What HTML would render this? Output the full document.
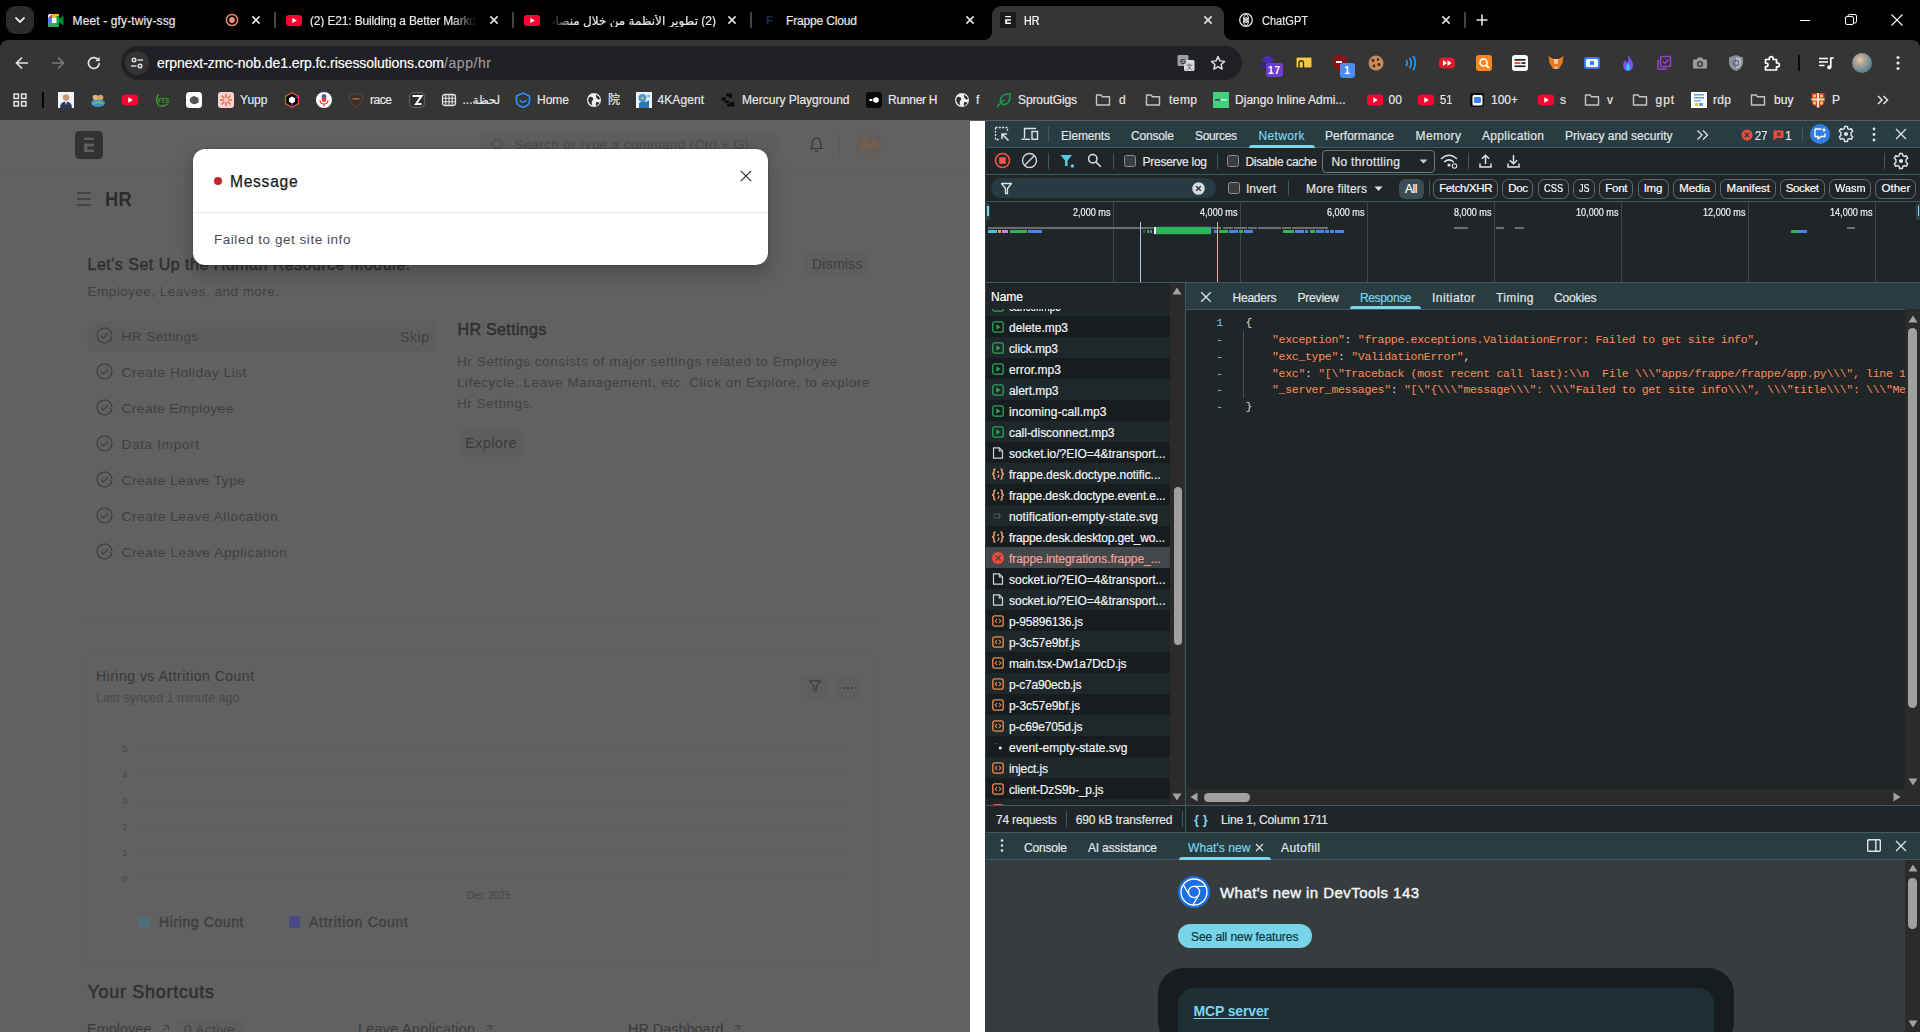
<!DOCTYPE html>
<html lang="en"><head><meta charset="utf-8"><title>HR</title>
<style>
html,body{margin:0;padding:0;background:#000;}
body{width:1920px;height:1032px;overflow:hidden;position:relative;font-family:"Liberation Sans","Noto Sans CJK SC",sans-serif;}
#root{position:absolute;left:0;top:0;width:1920px;height:1032px;overflow:hidden;}
#root div,#root span,#root svg{position:absolute;}
#root div{box-sizing:border-box;}
.t{white-space:pre;line-height:1;}
</style></head>
<body><div id="root">
<div style="left:0px;top:0px;width:1920px;height:40px;background:#000;"></div>
<div style="left:0px;top:40px;width:1920px;height:80px;background:#353535;border-radius:8px 8px 0 0;"></div>
<div style="left:6px;top:6px;width:28px;height:28px;background:#2b2b2b;border-radius:9px;"></div>
<svg style="left:13px;top:14px;" width="14" height="12" viewBox="0 0 14 12"><path d="M3 4 L7 8 L11 4" fill="none" stroke="#e3e3e3" stroke-width="1.8" stroke-linecap="round" stroke-linejoin="round"/></svg>
<svg style="left:48px;top:14px;" width="16" height="13" viewBox="0 0 16 13"><rect x="0" y="0" width="11" height="13" rx="2" fill="#fff"/><path d="M0 4 L4 0 L4 4 Z" fill="#ea4335"/><rect x="4" y="0" width="7" height="4" fill="#fbbc04"/><rect x="0" y="4" width="4" height="5.5" fill="#4285f4"/><rect x="0" y="9" width="11" height="4" rx="1" fill="#34a853"/><rect x="4" y="4" width="7" height="5" fill="#fff"/><path d="M11 4.5 L15.5 1.5 L15.5 11.5 L11 8.5 Z" fill="#00832d"/><rect x="8.5" y="2" width="2.5" height="9" fill="#00ac47"/></svg>
<span class="t" style="left:72.5px;top:14.86px;font-size:12px;color:#e8e8e8;-webkit-text-stroke:0.18px #e8e8e8;letter-spacing:0.129px;">Meet - gfy-twiy-ssg</span>
<svg style="left:224px;top:12px;" width="16" height="16" viewBox="0 0 16 16"><circle cx="8" cy="8" r="5.6" fill="none" stroke="#f28b82" stroke-width="1.5"/><circle cx="8" cy="8" r="2.9" fill="#f28b82"/></svg>
<svg style="left:248px;top:12px;" width="16" height="16" viewBox="0 0 16 16"><path d="M4.4 4.4 L11.6 11.6 M11.6 4.4 L4.4 11.6" stroke="#e3e3e3" stroke-width="1.6" fill="none"/></svg>
<div style="left:274.2px;top:12px;width:2px;height:16px;background:#454545;"></div>
<svg style="left:286.0px;top:15.0px;" width="16" height="11" viewBox="0 0 16 11"><rect x="0" y="0" width="16" height="11" rx="3" fill="#ff0033"/><path d="M6.4 2.97 L10.88 5.5 L6.4 8.03 Z" fill="#fff"/></svg>
<span class="t" style="left:310px;top:14.86px;font-size:12px;color:#e8e8e8;-webkit-text-stroke:0.18px #e8e8e8;letter-spacing:-0.153px;-webkit-mask-image:linear-gradient(90deg,#000 86%,transparent 100%);">(2) E21: Building a Better Markd</span>
<svg style="left:486px;top:12px;" width="16" height="16" viewBox="0 0 16 16"><path d="M4.4 4.4 L11.6 11.6 M11.6 4.4 L4.4 11.6" stroke="#e3e3e3" stroke-width="1.6" fill="none"/></svg>
<div style="left:512.2px;top:12px;width:2px;height:16px;background:#454545;"></div>
<svg style="left:523.5px;top:15.0px;" width="16" height="11" viewBox="0 0 16 11"><rect x="0" y="0" width="16" height="11" rx="3" fill="#ff0033"/><path d="M6.4 2.97 L10.88 5.5 L6.4 8.03 Z" fill="#fff"/></svg>
<span class="t" style="left:550px;top:14.86px;font-size:12px;color:#e8e8e8;-webkit-text-stroke:0.18px #e8e8e8;direction:rtl;width:166px;text-align:right;font-family:&quot;Liberation Sans&quot;,&quot;DejaVu Sans&quot;,sans-serif;-webkit-mask-image:linear-gradient(270deg,#000 86%,transparent 100%);">(2) تطوير الأنظمة من خلال منصات</span>
<svg style="left:724px;top:12px;" width="16" height="16" viewBox="0 0 16 16"><path d="M4.4 4.4 L11.6 11.6 M11.6 4.4 L4.4 11.6" stroke="#e3e3e3" stroke-width="1.6" fill="none"/></svg>
<div style="left:750.2px;top:12px;width:2px;height:16px;background:#454545;"></div>
<span class="t" style="left:766px;top:15.29px;font-size:11.5px;color:#16304f;font-weight:700;">F</span>
<span class="t" style="left:786px;top:14.86px;font-size:12px;color:#e8e8e8;-webkit-text-stroke:0.18px #e8e8e8;letter-spacing:-0.155px;">Frappe Cloud</span>
<svg style="left:962px;top:12px;" width="16" height="16" viewBox="0 0 16 16"><path d="M4.4 4.4 L11.6 11.6 M11.6 4.4 L4.4 11.6" stroke="#e3e3e3" stroke-width="1.6" fill="none"/></svg>
<div style="left:992px;top:6px;width:232px;height:34px;background:#353535;border-radius:9px 9px 0 0;"></div>
<svg style="left:984px;top:32px;" width="8" height="8" viewBox="0 0 8 8"><path d="M8 0 L8 8 L0 8 A8 8 0 0 0 8 0 Z" fill="#353535"/></svg>
<svg style="left:1224px;top:32px;" width="8" height="8" viewBox="0 0 8 8"><path d="M0 0 L0 8 L8 8 A8 8 0 0 1 0 0 Z" fill="#353535"/></svg>
<div style="left:1000px;top:12px;width:16px;height:16px;background:#1a1a1a;border-radius:2.5px;"></div>
<svg style="left:1000px;top:12px;" width="16" height="16" viewBox="0 0 28 28"><path d="M9.1 6.8 H19 V9 H9.1 Z M9.1 12.5 H19 V15.4 H12.4 V18.4 H19 V21.1 H9.1 Z" fill="#fff"/></svg>
<span class="t" style="left:1024px;top:14.86px;font-size:12px;color:#fff;-webkit-text-stroke:0.18px #fff;transform:scaleX(0.8943);transform-origin:0 50%;">HR</span>
<svg style="left:1200px;top:12px;" width="16" height="16" viewBox="0 0 16 16"><path d="M4.4 4.4 L11.6 11.6 M11.6 4.4 L4.4 11.6" stroke="#e3e3e3" stroke-width="1.6" fill="none"/></svg>
<svg style="left:1238px;top:12px;" width="16" height="16" viewBox="0 0 16 16"><g fill="none" stroke="#e8e8e8" stroke-width="1.3"><circle cx="8" cy="8" r="6.3"/><path d="M8 1.7 L11 6 L8 8 L5 6 Z M8 14.3 L5 10 L8 8 L11 10 Z" stroke-width="1"/><circle cx="8" cy="8" r="2.2"/></g></svg>
<span class="t" style="left:1262px;top:14.86px;font-size:12px;color:#e8e8e8;-webkit-text-stroke:0.18px #e8e8e8;transform:scaleX(0.9197);transform-origin:0 50%;">ChatGPT</span>
<svg style="left:1438px;top:12px;" width="16" height="16" viewBox="0 0 16 16"><path d="M4.4 4.4 L11.6 11.6 M11.6 4.4 L4.4 11.6" stroke="#e3e3e3" stroke-width="1.6" fill="none"/></svg>
<div style="left:1464.2px;top:12px;width:2px;height:16px;background:#454545;"></div>
<svg style="left:1474px;top:12px;" width="16" height="16" viewBox="0 0 16 16"><path d="M8 2.5 V13.5 M2.5 8 H13.5" stroke="#e8e8e8" stroke-width="1.6" fill="none"/></svg>
<div style="left:1800px;top:20px;width:10px;height:1px;background:#fff;"></div>
<svg style="left:1845px;top:14px;" width="12" height="12" viewBox="0 0 12 12"><rect x="0.5" y="2.5" width="8" height="8" rx="1.5" fill="none" stroke="#fff" stroke-width="1"/><path d="M3 2.5 V2 Q3 0.5 4.5 0.5 H10 Q11.5 0.5 11.5 2 V7.5 Q11.5 9 10 9 H9" fill="none" stroke="#fff" stroke-width="1"/></svg>
<svg style="left:1891px;top:14px;" width="12" height="12" viewBox="0 0 12 12"><path d="M0.5 0.5 L11.5 11.5 M11.5 0.5 L0.5 11.5" stroke="#fff" stroke-width="1.1" fill="none"/></svg>
<svg style="left:14px;top:55px;" width="16" height="16" viewBox="0 0 16 16"><path d="M14 8 H2.5 M8 2.5 L2.5 8 L8 13.5" fill="none" stroke="#e3e3e3" stroke-width="1.7" stroke-linejoin="miter"/></svg>
<svg style="left:50px;top:55px;" width="16" height="16" viewBox="0 0 16 16"><path d="M2 8 H13.5 M8 2.5 L13.5 8 L8 13.5" fill="none" stroke="#787878" stroke-width="1.7"/></svg>
<svg style="left:86px;top:55px;" width="16" height="16" viewBox="0 0 16 16"><path d="M13.2 8 A5.4 5.4 0 1 1 11.6 4.2" fill="none" stroke="#e3e3e3" stroke-width="1.7"/><path d="M13.6 1.8 V6.2 H9.2 Z" fill="#e3e3e3"/></svg>
<div style="left:120.5px;top:46px;width:1121.5px;height:34px;background:#202124;border-radius:17px;"></div>
<div style="left:125px;top:51px;width:24px;height:24px;background:#343434;border-radius:12px;"></div>
<svg style="left:130px;top:56px;" width="14" height="14" viewBox="0 0 14 14"><g fill="none" stroke="#e3e3e3" stroke-width="1.4"><circle cx="4" cy="4" r="1.8"/><path d="M7.5 4 H13"/><circle cx="10" cy="10" r="1.8"/><path d="M1 10 H6.5"/></g></svg>
<span class="t" style="left:157px;top:56.17px;font-size:14px;color:#fff;-webkit-text-stroke:0.18px #fff;letter-spacing:-0.073px;">erpnext-zmc-nob.de1.erp.fc.risessolutions.com</span>
<span class="t" style="left:444px;top:56.17px;font-size:14px;color:#9a9a9a;-webkit-text-stroke:0.18px #9a9a9a;letter-spacing:0.570px;">/app/hr</span>
<svg style="left:1177px;top:54px;" width="18" height="18" viewBox="0 0 18 18"><rect x="0.5" y="1" width="11" height="11" rx="1.5" fill="#9e9e9e"/><rect x="7" y="6" width="10.5" height="11" rx="1.5" fill="#dadada"/><text x="6" y="10" font-size="8" font-weight="700" text-anchor="middle" fill="#2a2a2a" font-family="Liberation Sans, sans-serif">G</text><text x="12.3" y="15" font-size="7" text-anchor="middle" fill="#444" font-family="Liberation Sans, sans-serif">文</text></svg>
<svg style="left:1210px;top:55px;" width="16" height="16" viewBox="0 0 18 18"><path d="M9 1.8 L11.2 6.6 L16.4 7.2 L12.5 10.7 L13.6 15.9 L9 13.2 L4.4 15.9 L5.5 10.7 L1.6 7.2 L6.8 6.6 Z" fill="none" stroke="#e3e3e3" stroke-width="1.6" stroke-linejoin="round"/></svg>
<svg style="left:1259.0px;top:54.0px;overflow:visible;" width="18" height="18" viewBox="0 0 18 18"><path d="M9 1 L16 6 L9 10 L2 6 Z" fill="#4b2bb5"/><path d="M2 8 L9 12 L9 16 L2 12 Z" fill="#3b1f9a"/></svg>
<div style="left:1265.5px;top:62.5px;width:17px;height:14px;background:#6c3fd1;border-radius:3px;"></div>
<span class="t" style="left:1268px;top:65.55px;font-size:10px;color:#fff;font-weight:700;letter-spacing:0.878px;">17</span>
<svg style="left:1295.0px;top:54.0px;overflow:visible;" width="18" height="18" viewBox="0 0 18 18"><rect x="1" y="3" width="16" height="11" rx="1.5" fill="#f2c744" stroke="#2a2a2a" stroke-width="1"/><path d="M4 14 V8.5 Q4 7 5.5 7 H7 Q8.5 7 8.5 8.5 V14" fill="none" stroke="#2a2a2a" stroke-width="1.3"/></svg>
<svg style="left:1331.0px;top:54.0px;overflow:visible;" width="18" height="18" viewBox="0 0 18 18"><path d="M9 1 L16 3 V9 Q16 14 9 17 Q2 14 2 9 V3 Z" fill="#8e1414"/><rect x="5" y="7" width="6" height="2" fill="#fff"/></svg>
<div style="left:1339.5px;top:63px;width:15px;height:15px;background:#4c8df6;border-radius:3px;"></div>
<span class="t" style="left:1344.3px;top:65.55px;font-size:10px;color:#fff;font-weight:700;">1</span>
<svg style="left:1367.0px;top:54.0px;overflow:visible;" width="18" height="18" viewBox="0 0 18 18"><circle cx="9" cy="9" r="7.5" fill="#c98a5b"/><circle cx="6" cy="6.5" r="1.4" fill="#3a2415"/><circle cx="11" cy="5.5" r="1.2" fill="#3a2415"/><circle cx="12" cy="10.5" r="1.5" fill="#3a2415"/><circle cx="7" cy="12" r="1.4" fill="#3a2415"/></svg>
<svg style="left:1402.0px;top:54.0px;overflow:visible;" width="18" height="18" viewBox="0 0 18 18"><g fill="none" stroke="#1a9bf0" stroke-width="1.8" stroke-linecap="round"><path d="M4.5 6.5 Q6 9 4.5 11.5"/><path d="M8 4.5 Q10.5 9 8 13.5"/><path d="M11.5 2.5 Q15 9 11.5 15.5"/></g></svg>
<svg style="left:1438.0px;top:54.0px;overflow:visible;" width="18" height="18" viewBox="0 0 18 18"><rect x="1" y="3.5" width="16" height="11" rx="4" fill="#e01b2c"/><path d="M5 6 L9 9 L5 12 Z M9.5 6 L13.5 9 L9.5 12 Z" fill="#fff"/></svg>
<svg style="left:1475.0px;top:54.0px;overflow:visible;" width="18" height="18" viewBox="0 0 18 18"><rect x="1" y="1" width="16" height="16" rx="3" fill="#f5871f"/><circle cx="8.5" cy="8.5" r="3.5" fill="none" stroke="#fff" stroke-width="1.6"/><path d="M11 11 L14 14" stroke="#fff" stroke-width="1.8"/></svg>
<svg style="left:1511.0px;top:54.0px;overflow:visible;" width="18" height="18" viewBox="0 0 18 18"><rect x="1" y="1" width="16" height="16" rx="3" fill="#fff"/><rect x="3.5" y="5" width="11" height="1.7" fill="#222"/><rect x="3.5" y="8.2" width="6" height="1.7" fill="#e53935"/><rect x="10.5" y="8.2" width="4" height="1.7" fill="#222"/><rect x="3.5" y="11.4" width="11" height="1.7" fill="#222"/></svg>
<svg style="left:1547.0px;top:54.0px;overflow:visible;" width="18" height="18" viewBox="0 0 18 18"><path d="M1.5 2 L6.5 5 H11.5 L16.5 2 L15.5 9 L12 15 H6 L2.5 9 Z" fill="#e8761b"/><path d="M6.5 5 H11.5 L10.5 10 H7.5 Z" fill="#f5c9a3"/><path d="M7 12.5 H11 L10 15 H8 Z" fill="#d0c0b0"/></svg>
<svg style="left:1583.0px;top:54.0px;overflow:visible;" width="18" height="18" viewBox="0 0 18 18"><rect x="1" y="3" width="16" height="12" rx="3" fill="#3d7bf7"/><rect x="3" y="5" width="12" height="8" rx="1.5" fill="#fff"/><circle cx="9" cy="9" r="2.3" fill="#3d7bf7"/></svg>
<svg style="left:1619.0px;top:54.0px;overflow:visible;" width="18" height="18" viewBox="0 0 18 18"><path d="M9 1 Q15 8 14 12 Q13 17 9 17 Q5 17 4 12 Q3.5 9 6.5 6 Q7 9 8.5 8 Q10 5 9 1 Z" fill="#7b4ff0"/><path d="M9 9 Q12 12 11 14.5 Q10 16.5 9 16.5 Q7 16 7 13.5 Q7 11.5 9 9 Z" fill="#38c6f4"/></svg>
<svg style="left:1655.0px;top:54.0px;overflow:visible;" width="18" height="18" viewBox="0 0 18 18"><g fill="none" stroke="#9a3fd0" stroke-width="1.5"><path d="M3 6 V15 H12"/><rect x="5.5" y="2.5" width="10" height="10" rx="1"/><path d="M8 7.5 L10 9.5 L13.5 5.5"/></g></svg>
<svg style="left:1691.0px;top:54.0px;overflow:visible;" width="18" height="18" viewBox="0 0 18 18"><path d="M2 5.5 H5.5 L7 3.5 H11 L12.5 5.5 H16 V14.5 H2 Z" fill="#9a9a9a"/><circle cx="9" cy="10" r="3" fill="#343434"/><circle cx="9" cy="10" r="1.7" fill="#9a9a9a"/></svg>
<svg style="left:1727.0px;top:54.0px;overflow:visible;" width="18" height="18" viewBox="0 0 18 18"><path d="M9 1 L16 3.5 V9 Q16 14 9 17 Q2 14 2 9 V3.5 Z" fill="#8b919a"/><path d="M9 3 L14 4.8 V9 Q14 12.8 9 15 Z" fill="#b5bcc6"/><circle cx="9" cy="9" r="2.6" fill="none" stroke="#5d6672" stroke-width="1.2"/></svg>
<svg style="left:1763.0px;top:54.0px;overflow:visible;" width="18" height="18" viewBox="0 0 18 18"><path d="M2.5 5.5 H6.3 V4.5 A1.9 1.9 0 0 1 10.1 4.5 V5.5 H13.5 V9 H14.5 A1.9 1.9 0 0 1 14.5 12.8 H13.5 V16 H2.5 V12.5 H3.3 A1.7 1.7 0 0 0 3.3 9.1 H2.5 Z" fill="none" stroke="#fff" stroke-width="1.7" stroke-linejoin="round"/></svg>
<div style="left:1798px;top:55px;width:2px;height:16px;background:#0a0a0a;"></div>
<svg style="left:1817.0px;top:54.0px;overflow:visible;" width="18" height="18" viewBox="0 0 18 18"><g stroke="#fff" stroke-width="1.7" fill="none"><path d="M2 4.5 H11 M2 8 H11 M2 11.5 H7.5"/><path d="M13.8 13 V4 H16.8"/></g><circle cx="12.3" cy="13.3" r="2.1" fill="#fff"/></svg>
<div style="left:1852px;top:53px;width:20px;height:20px;background:#8a9aa8;border-radius:10px;background:radial-gradient(circle at 40% 35%,#d8c8b8 0,#b9a690 25%,#6f8f9c 55%,#4d6a58 100%);"></div>
<svg style="left:1890px;top:54px;" width="16" height="18" viewBox="0 0 16 18"><circle cx="8" cy="3.5" r="1.6" fill="#e3e3e3"/><circle cx="8" cy="9" r="1.6" fill="#e3e3e3"/><circle cx="8" cy="14.5" r="1.6" fill="#e3e3e3"/></svg>
<svg style="left:13px;top:93px;" width="14" height="14" viewBox="0 0 16 16"><g fill="none" stroke="#e3e3e3" stroke-width="1.7"><rect x="1.2" y="1.2" width="5" height="5"/><rect x="9.8" y="1.2" width="5" height="5"/><rect x="1.2" y="9.8" width="5" height="5"/><rect x="9.8" y="9.8" width="5" height="5"/></g></svg>
<div style="left:42px;top:92px;width:2px;height:16px;background:#050505;"></div>
<svg style="left:58.0px;top:92.0px;" width="16" height="16" viewBox="0 0 16 16"><rect width="16" height="16" fill="#f4f4f6"/><path d="M2 16 Q2 9.5 8 9.5 Q14 9.5 14 16 Z" fill="#2d3c5e"/><circle cx="8" cy="5.5" r="3.2" fill="#c79a7a"/><path d="M7 9.5 L8 13 L9 9.5 Z" fill="#fff"/></svg>
<svg style="left:90.0px;top:92.0px;" width="16" height="16" viewBox="0 0 16 16"><ellipse cx="8" cy="11" rx="7" ry="4" fill="#3f8fd0"/><circle cx="5.5" cy="5.5" r="2.8" fill="#e3b07c"/><circle cx="10.5" cy="5.5" r="2.8" fill="#d9a36d"/><path d="M3 12 Q8 8 13 12" stroke="#79c257" stroke-width="1.5" fill="none"/></svg>
<svg style="left:122.0px;top:92.0px;" width="16" height="16" viewBox="0 0 16 16"><rect x="0" y="2.5" width="16" height="11" rx="3" fill="#ff0033"/><path d="M6.3 5.3 L10.8 8 L6.3 10.7 Z" fill="#fff"/></svg>
<svg style="left:153.5px;top:92.0px;" width="16" height="16" viewBox="0 0 16 16"><path d="M4.5 2.5 Q0.5 8 4.5 13.5 M4.5 13.5 Q9 15.5 13.5 12" fill="none" stroke="#3f9a2b" stroke-width="1.3"/><text x="9" y="10.5" font-size="6.5" font-weight="700" text-anchor="middle" fill="#3f9a2b" font-family="Liberation Sans, sans-serif">YTS</text></svg>
<svg style="left:186.0px;top:92.0px;" width="16" height="16" viewBox="0 0 16 16"><rect width="16" height="16" rx="3.5" fill="#fff"/><path d="M4 10 Q3 6 6 5 Q8 3 10 5 Q13 5 12.5 8 Q13.5 11 10.5 11.5 Q8 13 6 11.5 Z" fill="#555"/></svg>
<svg style="left:218.0px;top:92.0px;" width="16" height="16" viewBox="0 0 16 16"><rect width="16" height="16" rx="3" fill="#f8d3cb"/><g stroke="#e46a50" stroke-width="1.5" stroke-linecap="round"><path d="M8 2.5 V5.5 M8 10.5 V13.5 M2.5 8 H5.5 M10.5 8 H13.5 M4 4 L6 6 M10 10 L12 12 M12 4 L10 6 M6 10 L4 12"/></g></svg>
<span class="t" style="left:240px;top:93.86px;font-size:12px;color:#e8e8e8;-webkit-text-stroke:0.18px #e8e8e8;letter-spacing:0.046px;">Yupp</span>
<svg style="left:284.0px;top:92.0px;" width="16" height="16" viewBox="0 0 16 16"><path d="M8 0.8 L14.5 4.4 V11.6 L8 15.2 L1.5 11.6 V4.4 Z" fill="#0b0b0b" stroke="#e8523a" stroke-width="1.2"/><path d="M8 15 V8 L14.3 4.5" fill="none" stroke="#7b4ff0" stroke-width="1"/><path d="M8 4.5 L11 6.2 V9.8 L8 11.5 L5 9.8 V6.2 Z" fill="#fff"/></svg>
<svg style="left:316.0px;top:92.0px;" width="16" height="16" viewBox="0 0 16 16"><circle cx="8" cy="8" r="8" fill="#fff"/><rect x="5.7" y="2.5" width="4.6" height="7.5" rx="2.3" fill="#e53935"/><rect x="5.7" y="2.5" width="4.6" height="3" rx="1.5" fill="#2a5db0"/><path d="M4 8 Q4 12 8 12 Q12 12 12 8" fill="none" stroke="#e53935" stroke-width="1.1"/><path d="M8 12 V14.5" stroke="#e53935" stroke-width="1.1"/></svg>
<svg style="left:348.0px;top:92.0px;" width="16" height="16" viewBox="0 0 16 16"><path d="M1 2.5 Q8 0.5 15 2.5 Q15 11 8 15.5 Q1 11 1 2.5 Z" fill="#3a302c" stroke="#5a4a40" stroke-width="0.8"/><path d="M4 6 H11 L12 7.5 H5 Z" fill="#c8561f"/></svg>
<span class="t" style="left:370px;top:93.86px;font-size:12px;color:#e8e8e8;-webkit-text-stroke:0.18px #e8e8e8;letter-spacing:-0.447px;">race</span>
<svg style="left:409.0px;top:92.0px;" width="16" height="16" viewBox="0 0 16 16"><rect x="0.7" y="0.7" width="14.6" height="14.6" rx="3" fill="#2c2c2c" stroke="#6a6a6a" stroke-width="1"/><path d="M3.5 4 H12.5 L7 12 H12.5" fill="none" stroke="#fff" stroke-width="2"/></svg>
<svg style="left:441.0px;top:92.0px;" width="16" height="16" viewBox="0 0 16 16"><rect x="1.5" y="2.5" width="13" height="11" rx="2.5" fill="none" stroke="#e3e3e3" stroke-width="1.3"/><path d="M1.5 6.2 H14.5 M1.5 9.8 H14.5 M4.8 2.5 V13.5 M8 2.5 V13.5 M11.2 2.5 V13.5" stroke="#e3e3e3" stroke-width="1.1"/></svg>
<span class="t" style="left:462.5px;top:93.86px;font-size:12px;color:#e8e8e8;-webkit-text-stroke:0.18px #e8e8e8;font-family:&quot;Liberation Sans&quot;,&quot;DejaVu Sans&quot;,sans-serif;width:36px;text-align:left;">...لحظة</span>
<svg style="left:514.5px;top:92.0px;" width="16" height="16" viewBox="0 0 16 16"><path d="M8 1 L14.5 4 V9.5 Q14.5 13 8 15.3 Q1.5 13 1.5 9.5 V4 Z" fill="none" stroke="#2f8df5" stroke-width="1.7" stroke-linejoin="round"/><path d="M5 8.5 Q8 12 11 8.5" fill="none" stroke="#2f8df5" stroke-width="1.6" stroke-linecap="round"/></svg>
<span class="t" style="left:537px;top:93.86px;font-size:12px;color:#e8e8e8;-webkit-text-stroke:0.18px #e8e8e8;letter-spacing:-0.003px;">Home</span>
<svg style="left:585.5px;top:92.0px;" width="16" height="16" viewBox="0 0 16 16"><circle cx="8" cy="8" r="7" fill="#f1f1f1"/><path d="M3 5 Q6 4 7 6 Q8 8 6 9 Q5 11 6.5 13.5 Q3 12 2 8.5 Z M10 2.5 Q13.5 4 14.3 7 Q12 8 11 6.5 Q9.5 5 10 2.5 Z M10 10 Q12.5 9.5 13.5 11 Q12 13.5 9.8 14 Z" fill="#343434"/></svg>
<span class="t" style="left:608px;top:93.86px;font-size:12px;color:#e8e8e8;-webkit-text-stroke:0.18px #e8e8e8;">院</span>
<svg style="left:636.0px;top:92.0px;" width="16" height="16" viewBox="0 0 16 16"><rect width="16" height="16" fill="#e9f4fb"/><circle cx="6.5" cy="6" r="4" fill="#3d9bd8"/><circle cx="6.5" cy="6" r="1.6" fill="#f2a23a"/><path d="M3 16 V11 Q6 8.5 10 10 L13 8 V16 Z" fill="#2b76b4"/><circle cx="12.5" cy="4" r="1.5" fill="#6fb7e6"/></svg>
<span class="t" style="left:657.5px;top:93.86px;font-size:12px;color:#e8e8e8;-webkit-text-stroke:0.18px #e8e8e8;letter-spacing:0.078px;">4KAgent</span>
<svg style="left:719.5px;top:92.0px;" width="16" height="16" viewBox="0 0 16 16"><path d="M6 1.5 H12 V6 H9 V4.5 H6 Z M1.5 5.5 H6 V8.5 H9 V11 H4.5 V8.5 H1.5 Z M10 10 H14.5 V14.5 H7 V11.5 H10 Z" fill="#0c0c0c"/></svg>
<span class="t" style="left:742px;top:93.86px;font-size:12px;color:#e8e8e8;-webkit-text-stroke:0.18px #e8e8e8;letter-spacing:0.008px;">Mercury Playground</span>
<svg style="left:866.0px;top:92.0px;" width="16" height="16" viewBox="0 0 16 16"><rect width="16" height="16" rx="3" fill="#0a0a0a"/><circle cx="10" cy="8" r="2.8" fill="#fff"/><rect x="3.2" y="7" width="3.5" height="2" rx="1" fill="#fff"/></svg>
<span class="t" style="left:888px;top:93.86px;font-size:12px;color:#e8e8e8;-webkit-text-stroke:0.18px #e8e8e8;letter-spacing:-0.265px;">Runner H</span>
<svg style="left:954.0px;top:92.0px;" width="16" height="16" viewBox="0 0 16 16"><circle cx="8" cy="8" r="7" fill="#f1f1f1"/><path d="M3 5 Q6 4 7 6 Q8 8 6 9 Q5 11 6.5 13.5 Q3 12 2 8.5 Z M10 2.5 Q13.5 4 14.3 7 Q12 8 11 6.5 Q9.5 5 10 2.5 Z M10 10 Q12.5 9.5 13.5 11 Q12 13.5 9.8 14 Z" fill="#343434"/></svg>
<span class="t" style="left:976px;top:93.86px;font-size:12px;color:#e8e8e8;-webkit-text-stroke:0.18px #e8e8e8;">f</span>
<svg style="left:996.0px;top:92.0px;" width="16" height="16" viewBox="0 0 16 16"><path d="M14 2 Q6 1.5 4.5 7 Q3.8 10 6 12 Q10 13.5 12.5 10 Q14.5 7 14 2 Z M1.5 14.5 Q4 11 8 8" fill="none" stroke="#1f9a50" stroke-width="1.5" stroke-linecap="round"/></svg>
<span class="t" style="left:1018px;top:93.86px;font-size:12px;color:#e8e8e8;-webkit-text-stroke:0.18px #e8e8e8;letter-spacing:-0.114px;">SproutGigs</span>
<svg style="left:1094.5px;top:92.0px;" width="16" height="16" viewBox="0 0 16 16"><path d="M1.5 3 H6 L7.5 4.7 H14.5 V13 H1.5 Z" fill="none" stroke="#c4c4c4" stroke-width="1.4" stroke-linejoin="round"/></svg>
<span class="t" style="left:1119px;top:93.86px;font-size:12px;color:#e8e8e8;-webkit-text-stroke:0.18px #e8e8e8;">d</span>
<svg style="left:1144.5px;top:92.0px;" width="16" height="16" viewBox="0 0 16 16"><path d="M1.5 3 H6 L7.5 4.7 H14.5 V13 H1.5 Z" fill="none" stroke="#c4c4c4" stroke-width="1.4" stroke-linejoin="round"/></svg>
<span class="t" style="left:1169px;top:93.86px;font-size:12px;color:#e8e8e8;-webkit-text-stroke:0.18px #e8e8e8;letter-spacing:0.441px;">temp</span>
<svg style="left:1213.0px;top:92.0px;" width="16" height="16" viewBox="0 0 16 16"><rect width="16" height="16" fill="#44d07b"/><rect x="2" y="7" width="5" height="1.6" fill="#5b2a86"/><rect x="8" y="7" width="6" height="1.6" fill="#d8f5e3"/></svg>
<span class="t" style="left:1235px;top:93.86px;font-size:12px;color:#e8e8e8;-webkit-text-stroke:0.18px #e8e8e8;letter-spacing:0.022px;">Django Inline Admi...</span>
<svg style="left:1367.0px;top:92.0px;" width="16" height="16" viewBox="0 0 16 16"><rect x="0" y="2.5" width="16" height="11" rx="3" fill="#ff0033"/><path d="M6.3 5.3 L10.8 8 L6.3 10.7 Z" fill="#fff"/></svg>
<span class="t" style="left:1388.6px;top:93.86px;font-size:12px;color:#e8e8e8;-webkit-text-stroke:0.18px #e8e8e8;letter-spacing:0.054px;">00</span>
<svg style="left:1418.0px;top:92.0px;" width="16" height="16" viewBox="0 0 16 16"><rect x="0" y="2.5" width="16" height="11" rx="3" fill="#ff0033"/><path d="M6.3 5.3 L10.8 8 L6.3 10.7 Z" fill="#fff"/></svg>
<span class="t" style="left:1440px;top:93.86px;font-size:12px;color:#e8e8e8;-webkit-text-stroke:0.18px #e8e8e8;transform:scaleX(0.9291);transform-origin:0 50%;">51</span>
<svg style="left:1469.0px;top:92.0px;" width="16" height="16" viewBox="0 0 16 16"><rect x="1" y="1" width="14" height="14" rx="2.5" fill="#0c0c0c"/><rect x="3.5" y="3" width="10" height="10.5" rx="1.5" fill="#fff"/><rect x="5" y="5" width="7" height="6" rx="1" fill="#3d7bf7"/></svg>
<span class="t" style="left:1491px;top:93.86px;font-size:12px;color:#e8e8e8;-webkit-text-stroke:0.18px #e8e8e8;letter-spacing:-0.009px;">100+</span>
<svg style="left:1537.7px;top:92.0px;" width="16" height="16" viewBox="0 0 16 16"><rect x="0" y="2.5" width="16" height="11" rx="3" fill="#ff0033"/><path d="M6.3 5.3 L10.8 8 L6.3 10.7 Z" fill="#fff"/></svg>
<span class="t" style="left:1560px;top:93.86px;font-size:12px;color:#e8e8e8;-webkit-text-stroke:0.18px #e8e8e8;">s</span>
<svg style="left:1584.0px;top:92.0px;" width="16" height="16" viewBox="0 0 16 16"><path d="M1.5 3 H6 L7.5 4.7 H14.5 V13 H1.5 Z" fill="none" stroke="#c4c4c4" stroke-width="1.4" stroke-linejoin="round"/></svg>
<span class="t" style="left:1607px;top:93.86px;font-size:12px;color:#e8e8e8;-webkit-text-stroke:0.18px #e8e8e8;">v</span>
<svg style="left:1632.0px;top:92.0px;" width="16" height="16" viewBox="0 0 16 16"><path d="M1.5 3 H6 L7.5 4.7 H14.5 V13 H1.5 Z" fill="none" stroke="#c4c4c4" stroke-width="1.4" stroke-linejoin="round"/></svg>
<span class="t" style="left:1655.6px;top:93.86px;font-size:12px;color:#e8e8e8;-webkit-text-stroke:0.18px #e8e8e8;letter-spacing:0.860px;">gpt</span>
<svg style="left:1691.0px;top:92.0px;" width="16" height="16" viewBox="0 0 16 16"><rect width="16" height="16" fill="#fff"/><rect x="3" y="2" width="10" height="1.5" fill="#5aa0e0"/><rect x="3" y="5" width="10" height="1.5" fill="#5aa0e0"/><rect x="3" y="8" width="7" height="1.5" fill="#88b8e8"/><rect x="4" y="11" width="3" height="3" fill="#f2c744"/><rect x="8" y="11" width="4" height="3" fill="#5aa0e0"/></svg>
<span class="t" style="left:1713px;top:93.86px;font-size:12px;color:#e8e8e8;-webkit-text-stroke:0.18px #e8e8e8;letter-spacing:0.329px;">rdp</span>
<svg style="left:1750.0px;top:92.0px;" width="16" height="16" viewBox="0 0 16 16"><path d="M1.5 3 H6 L7.5 4.7 H14.5 V13 H1.5 Z" fill="none" stroke="#c4c4c4" stroke-width="1.4" stroke-linejoin="round"/></svg>
<span class="t" style="left:1774px;top:93.86px;font-size:12px;color:#e8e8e8;-webkit-text-stroke:0.18px #e8e8e8;letter-spacing:0.077px;">buy</span>
<svg style="left:1810.0px;top:92.0px;" width="16" height="16" viewBox="0 0 16 16"><path d="M1.5 1 H14.5 V9 Q14.5 13.5 8 15.5 Q1.5 13.5 1.5 9 Z" fill="#c8362c"/><path d="M8 1 V15.5 M1.5 7.5 H14.5" stroke="#f4e3c0" stroke-width="2.2"/><rect x="3" y="2.5" width="3" height="3" fill="#f2c744"/><rect x="10" y="2.5" width="3" height="3" fill="#f2c744"/><rect x="3" y="9.5" width="3" height="3" fill="#f2c744"/><rect x="10" y="9.5" width="3" height="3" fill="#f2c744"/></svg>
<span class="t" style="left:1832px;top:93.86px;font-size:12px;color:#e8e8e8;-webkit-text-stroke:0.18px #e8e8e8;">P</span>
<svg style="left:1876px;top:93px;" width="14" height="14" viewBox="0 0 14 14"><path d="M2 3 L6 7 L2 11 M7.5 3 L11.5 7 L7.5 11" fill="none" stroke="#e3e3e3" stroke-width="1.5"/></svg>
<div style="left:0px;top:120px;width:970px;height:912px;background:#616161;"></div>
<div style="left:970px;top:120px;width:15px;height:912px;background:#ffffff;"></div>
<div style="left:0px;top:168px;width:970px;height:1px;background:#5d5d5d;"></div>
<div style="left:75px;top:131px;width:28px;height:28px;background:#323232;border-radius:4.5px;"></div>
<svg style="left:75px;top:131px;" width="28" height="28" viewBox="0 0 28 28"><path d="M9.1 6.8 H19 V9 H9.1 Z M9.1 12.5 H19 V15.4 H12.4 V18.4 H19 V21.1 H9.1 Z" fill="#5f5f5f"/></svg>
<div style="left:479px;top:131px;width:299px;height:28px;background:#5e5e5e;border-radius:8px;"></div>
<svg style="left:490px;top:137px;" width="15" height="15" viewBox="0 0 15 15"><circle cx="7" cy="7" r="4.6" fill="none" stroke="#4a4a4a" stroke-width="1.1"/></svg>
<span class="t" style="left:514.3px;top:137.59px;font-size:13.5px;color:#4a4a4a;letter-spacing:0.383px;">Search or type a command (Ctrl + G)</span>
<svg style="left:808px;top:136px;" width="17" height="18" viewBox="0 0 17 18"><path d="M8.5 2 Q4.5 2 4.5 7 Q4.5 11 3 12.5 H14 Q12.5 11 12.5 7 Q12.5 2 8.5 2 Z" fill="none" stroke="#333" stroke-width="1.1" stroke-linejoin="round"/><path d="M7 14.5 Q8.5 16 10 14.5" fill="none" stroke="#333" stroke-width="1.1"/></svg>
<div style="left:839px;top:133px;width:1px;height:24px;background:#595959;"></div>
<div style="left:855px;top:130.7px;width:28px;height:28px;background:#645e5a;border-radius:14px;"></div>
<span class="t" style="left:859.2px;top:138.34px;font-size:13.8px;color:#8c5d3c;letter-spacing:0.590px;">AA</span>
<svg style="left:76px;top:191px;" width="16" height="16" viewBox="0 0 16 16"><path d="M1 2.05 H14.8 M1 8.1 H14.8 M1 14.1 H14.8" stroke="#3a3a3a" stroke-width="1.5" fill="none"/></svg>
<span class="t" style="left:104.5px;top:188.84px;font-size:20.3px;color:#2d2d2d;font-weight:700;transform:scaleX(0.9140);transform-origin:0 50%;">HR</span>
<span class="t" style="left:87.5px;top:257.48px;font-size:16px;color:#303030;-webkit-text-stroke:0.45px #303030;letter-spacing:0.496px;">Let&#x27;s Set Up the Human Resource Module.</span>
<span class="t" style="left:87.5px;top:284.59px;font-size:13.5px;color:#414141;letter-spacing:0.468px;">Employee, Leaves, and more.</span>
<div style="left:804px;top:250px;width:66px;height:28px;background:#5e5e5e;border-radius:8px;"></div>
<span class="t" style="left:812px;top:257.17px;font-size:14px;color:#3d3d3d;letter-spacing:0.234px;">Dismiss</span>
<div style="left:87px;top:320.5px;width:350px;height:31.5px;background:#5e5e5e;border-radius:8px;"></div>
<svg style="left:95.5px;top:327.3px;" width="17" height="17" viewBox="0 0 17 17"><circle cx="8.5" cy="8.5" r="7.5" fill="none" stroke="#3a3a3a" stroke-width="1.1"/><path d="M5.3 8.8 L7.6 11 L11.8 6.4" fill="none" stroke="#3a3a3a" stroke-width="1.1" stroke-linecap="round" stroke-linejoin="round"/></svg>
<span class="t" style="left:121.5px;top:330.42px;font-size:13.7px;color:#404040;letter-spacing:0.391px;">HR Settings</span>
<svg style="left:95.5px;top:363.3px;" width="17" height="17" viewBox="0 0 17 17"><circle cx="8.5" cy="8.5" r="7.5" fill="none" stroke="#3a3a3a" stroke-width="1.1"/><path d="M5.3 8.8 L7.6 11 L11.8 6.4" fill="none" stroke="#3a3a3a" stroke-width="1.1" stroke-linecap="round" stroke-linejoin="round"/></svg>
<span class="t" style="left:121.5px;top:366.42px;font-size:13.7px;color:#404040;letter-spacing:0.515px;">Create Holiday List</span>
<svg style="left:95.5px;top:399.3px;" width="17" height="17" viewBox="0 0 17 17"><circle cx="8.5" cy="8.5" r="7.5" fill="none" stroke="#3a3a3a" stroke-width="1.1"/><path d="M5.3 8.8 L7.6 11 L11.8 6.4" fill="none" stroke="#3a3a3a" stroke-width="1.1" stroke-linecap="round" stroke-linejoin="round"/></svg>
<span class="t" style="left:121.5px;top:402.42px;font-size:13.7px;color:#404040;letter-spacing:0.440px;">Create Employee</span>
<svg style="left:95.5px;top:435.3px;" width="17" height="17" viewBox="0 0 17 17"><circle cx="8.5" cy="8.5" r="7.5" fill="none" stroke="#3a3a3a" stroke-width="1.1"/><path d="M5.3 8.8 L7.6 11 L11.8 6.4" fill="none" stroke="#3a3a3a" stroke-width="1.1" stroke-linecap="round" stroke-linejoin="round"/></svg>
<span class="t" style="left:121.5px;top:438.42px;font-size:13.7px;color:#404040;letter-spacing:0.593px;">Data Import</span>
<svg style="left:95.5px;top:471.3px;" width="17" height="17" viewBox="0 0 17 17"><circle cx="8.5" cy="8.5" r="7.5" fill="none" stroke="#3a3a3a" stroke-width="1.1"/><path d="M5.3 8.8 L7.6 11 L11.8 6.4" fill="none" stroke="#3a3a3a" stroke-width="1.1" stroke-linecap="round" stroke-linejoin="round"/></svg>
<span class="t" style="left:121.5px;top:474.42px;font-size:13.7px;color:#404040;letter-spacing:0.500px;">Create Leave Type</span>
<svg style="left:95.5px;top:507.3px;" width="17" height="17" viewBox="0 0 17 17"><circle cx="8.5" cy="8.5" r="7.5" fill="none" stroke="#3a3a3a" stroke-width="1.1"/><path d="M5.3 8.8 L7.6 11 L11.8 6.4" fill="none" stroke="#3a3a3a" stroke-width="1.1" stroke-linecap="round" stroke-linejoin="round"/></svg>
<span class="t" style="left:121.5px;top:510.42px;font-size:13.7px;color:#404040;letter-spacing:0.536px;">Create Leave Allocation</span>
<svg style="left:95.5px;top:543.3px;" width="17" height="17" viewBox="0 0 17 17"><circle cx="8.5" cy="8.5" r="7.5" fill="none" stroke="#3a3a3a" stroke-width="1.1"/><path d="M5.3 8.8 L7.6 11 L11.8 6.4" fill="none" stroke="#3a3a3a" stroke-width="1.1" stroke-linecap="round" stroke-linejoin="round"/></svg>
<span class="t" style="left:121.5px;top:546.42px;font-size:13.7px;color:#404040;letter-spacing:0.573px;">Create Leave Application</span>
<span class="t" style="left:400px;top:330.17px;font-size:14px;color:#404040;letter-spacing:0.589px;">Skip</span>
<span class="t" style="left:457.5px;top:322.48px;font-size:16px;color:#2f2f2f;-webkit-text-stroke:0.45px #2f2f2f;letter-spacing:0.343px;">HR Settings</span>
<span class="t" style="left:457px;top:354.59px;font-size:13.5px;color:#424242;letter-spacing:0.599px;">Hr Settings consists of major settings related to Employee</span>
<span class="t" style="left:457px;top:375.59px;font-size:13.5px;color:#424242;letter-spacing:0.587px;">Lifecycle, Leave Management, etc. Click on Explore, to explore</span>
<span class="t" style="left:457px;top:396.59px;font-size:13.5px;color:#424242;letter-spacing:0.543px;">Hr Settings.</span>
<div style="left:458px;top:429px;width:66px;height:28px;background:#5e5e5e;border-radius:8px;"></div>
<span class="t" style="left:465px;top:435.75px;font-size:14.5px;color:#3a3a3a;letter-spacing:0.406px;">Explore</span>
<div style="left:82px;top:620px;width:793px;height:1px;background:#5c5c5c;"></div>
<div style="left:81px;top:655px;width:797px;height:311px;border:1px solid #5d5d5d;border-radius:9px;"></div>
<span class="t" style="left:96px;top:669.17px;font-size:14px;color:#383838;letter-spacing:0.489px;">Hiring vs Attrition Count</span>
<span class="t" style="left:96px;top:692.44px;font-size:12.5px;color:#484848;letter-spacing:0.042px;">Last synced 1 minute ago</span>
<div style="left:801px;top:675px;width:28px;height:24px;background:#5e5e5e;border-radius:7px;"></div>
<svg style="left:807.8px;top:679.3px;" width="14" height="14" viewBox="0 0 14 14"><path d="M1.5 2 H12.5 L8.3 7 V12 L5.7 10.5 V7 Z" fill="none" stroke="#333" stroke-width="1" stroke-linejoin="round"/></svg>
<div style="left:834px;top:675px;width:28px;height:24.5px;background:#5e5e5e;border-radius:7px;"></div>
<svg style="left:842px;top:686px;" width="12" height="4" viewBox="0 0 12 4"><rect x="0.9" y="1.1" width="1.9" height="1.9" fill="#383838"/><rect x="5" y="1.1" width="1.9" height="1.9" fill="#383838"/><rect x="9.1" y="1.1" width="1.9" height="1.9" fill="#383838"/></svg>
<span class="t" style="left:122px;top:743.98px;font-size:9.5px;color:#474747;">5</span>
<div style="left:135px;top:748px;width:710px;height:1px;background:#5e5e5e;"></div>
<span class="t" style="left:122px;top:769.98px;font-size:9.5px;color:#474747;">4</span>
<div style="left:135px;top:774px;width:710px;height:1px;background:#5e5e5e;"></div>
<span class="t" style="left:122px;top:795.98px;font-size:9.5px;color:#474747;">3</span>
<div style="left:135px;top:800px;width:710px;height:1px;background:#5e5e5e;"></div>
<span class="t" style="left:122px;top:821.98px;font-size:9.5px;color:#474747;">2</span>
<div style="left:135px;top:826px;width:710px;height:1px;background:#5e5e5e;"></div>
<span class="t" style="left:122px;top:847.98px;font-size:9.5px;color:#474747;">1</span>
<div style="left:135px;top:852px;width:710px;height:1px;background:#5e5e5e;"></div>
<span class="t" style="left:122px;top:873.98px;font-size:9.5px;color:#474747;">0</span>
<div style="left:135px;top:878px;width:710px;height:1px;background:#5e5e5e;"></div>
<span class="t" style="left:467px;top:890.55px;font-size:10px;color:#464646;letter-spacing:0.099px;">Dec 2025</span>
<div style="left:138px;top:916px;width:11.5px;height:11.5px;background:#4e6c79;border-radius:2px;"></div>
<span class="t" style="left:159px;top:915.17px;font-size:14px;color:#404040;-webkit-text-stroke:0.45px #404040;letter-spacing:0.608px;">Hiring Count</span>
<div style="left:288.5px;top:916px;width:11.5px;height:11.5px;background:#4a4985;border-radius:2px;"></div>
<span class="t" style="left:309px;top:915.17px;font-size:14px;color:#404040;-webkit-text-stroke:0.45px #404040;letter-spacing:0.735px;">Attrition Count</span>
<span class="t" style="left:87.5px;top:982.78px;font-size:18px;color:#2f2f2f;-webkit-text-stroke:0.45px #2f2f2f;letter-spacing:0.700px;">Your Shortcuts</span>
<span class="t" style="left:87px;top:1021.75px;font-size:14.5px;color:#3b3b3b;letter-spacing:0.004px;">Employee</span>
<svg style="left:160.5px;top:1024px;" width="9" height="9" viewBox="0 0 9 9"><path d="M1.5 7.5 L7.5 1.5 M2.8 1.5 H7.5 V6.2" fill="none" stroke="#414141" stroke-width="1" /></svg>
<div style="left:177px;top:1019px;width:65.5px;height:24px;background:#5e5e5e;border-radius:6px;"></div>
<span class="t" style="left:184px;top:1022.59px;font-size:13.5px;color:#424242;letter-spacing:0.461px;">0 Active</span>
<span class="t" style="left:358px;top:1021.75px;font-size:14.5px;color:#3b3b3b;letter-spacing:0.208px;">Leave Application</span>
<svg style="left:484px;top:1024px;" width="9" height="9" viewBox="0 0 9 9"><path d="M1.5 7.5 L7.5 1.5 M2.8 1.5 H7.5 V6.2" fill="none" stroke="#414141" stroke-width="1" /></svg>
<span class="t" style="left:628px;top:1021.75px;font-size:14.5px;color:#3b3b3b;letter-spacing:-0.037px;">HR Dashboard</span>
<svg style="left:732px;top:1024px;" width="9" height="9" viewBox="0 0 9 9"><path d="M1.5 7.5 L7.5 1.5 M2.8 1.5 H7.5 V6.2" fill="none" stroke="#414141" stroke-width="1" /></svg>
<div style="left:193px;top:149px;width:575px;height:116px;background:#ffffff;border-radius:12px;box-shadow:0 8px 20px rgba(0,0,0,0.25),0 0 2px rgba(0,0,0,0.3);"></div>
<div style="left:193px;top:212px;width:575px;height:1px;background:#e8e8e8;"></div>
<div style="left:214px;top:177px;width:8.3px;height:8.3px;background:#c0272d;border-radius:4.2px;"></div>
<span class="t" style="left:230px;top:173.81px;font-size:15.6px;color:#171717;-webkit-text-stroke:0.25px #171717;letter-spacing:0.718px;">Message</span>
<svg style="left:739px;top:169px;" width="14" height="14" viewBox="0 0 14 14"><path d="M1.8 1.8 L12.2 12.2 M12.2 1.8 L1.8 12.2" stroke="#2a2a2a" stroke-width="1.2" fill="none"/></svg>
<span class="t" style="left:214px;top:232.59px;font-size:13.5px;color:#4c4c4c;letter-spacing:0.538px;">Failed to get site info</span>
<div style="left:985px;top:120px;width:935px;height:912px;background:#202528;"></div>
<div style="left:985px;top:120px;width:1px;height:912px;background:#2c4148;"></div>
<div style="left:986px;top:120px;width:934px;height:28px;background:#283c42;"></div>
<div style="left:986px;top:147px;width:934px;height:1px;background:#3b5a62;"></div>
<div style="left:970px;top:120px;width:950px;height:1px;background:#5a5a5a;"></div>
<svg style="left:994px;top:126.3px;" width="17" height="17" viewBox="0 0 17 17"><g fill="none" stroke="#dfe3e5" stroke-width="1.3"><path d="M1.5 1.5 H13.5 V6" stroke-dasharray="2 1.3"/><path d="M1.5 1.5 V13.5 H6" stroke-dasharray="2 1.3"/><path d="M14.5 14.5 L8 8 M8 13 V8 H13" stroke-width="1.5"/></g></svg>
<svg style="left:1021px;top:126.4px;" width="18" height="17" viewBox="0 0 18 17"><g fill="none" stroke="#dfe3e5" stroke-width="1.4"><path d="M3.5 12 V2.5 H15"/><path d="M0.5 13.3 H9"/><rect x="11" y="5.5" width="5.5" height="7.8"/></g></svg>
<div style="left:1048px;top:126px;width:1px;height:16px;background:#3b5a62;"></div>
<span class="t" style="left:1061px;top:129.86px;font-size:12px;color:#e3e6e8;-webkit-text-stroke:0.18px #e3e6e8;letter-spacing:-0.146px;">Elements</span>
<span class="t" style="left:1131px;top:129.86px;font-size:12px;color:#e3e6e8;-webkit-text-stroke:0.18px #e3e6e8;letter-spacing:-0.171px;">Console</span>
<span class="t" style="left:1195px;top:129.86px;font-size:12px;color:#e3e6e8;-webkit-text-stroke:0.18px #e3e6e8;letter-spacing:-0.337px;">Sources</span>
<span class="t" style="left:1258.5px;top:129.86px;font-size:12px;color:#7cd5ea;-webkit-text-stroke:0.18px #7cd5ea;letter-spacing:0.332px;">Network</span>
<div style="left:1248.5px;top:145px;width:66px;height:3px;background:#7cd5ea;border-radius:3px 3px 0 0;"></div>
<span class="t" style="left:1325px;top:129.86px;font-size:12px;color:#e3e6e8;-webkit-text-stroke:0.18px #e3e6e8;letter-spacing:0.031px;">Performance</span>
<span class="t" style="left:1415.5px;top:129.86px;font-size:12px;color:#e3e6e8;-webkit-text-stroke:0.18px #e3e6e8;letter-spacing:0.433px;">Memory</span>
<span class="t" style="left:1482px;top:129.86px;font-size:12px;color:#e3e6e8;-webkit-text-stroke:0.18px #e3e6e8;letter-spacing:0.330px;">Application</span>
<span class="t" style="left:1565px;top:129.86px;font-size:12px;color:#e3e6e8;-webkit-text-stroke:0.18px #e3e6e8;letter-spacing:0.007px;">Privacy and security</span>
<svg style="left:1696px;top:129px;" width="13" height="12" viewBox="0 0 13 12"><path d="M1.5 1.5 L6 6 L1.5 10.5 M7 1.5 L11.5 6 L7 10.5" fill="none" stroke="#dfe3e5" stroke-width="1.3"/></svg>
<svg style="left:1741px;top:129px;" width="12" height="12" viewBox="0 0 12 12"><circle cx="6" cy="6" r="5.5" fill="#f04a3e"/><path d="M3.8 3.8 L8.2 8.2 M8.2 3.8 L3.8 8.2" stroke="#283c42" stroke-width="1.3"/></svg>
<span class="t" style="left:1755px;top:129.86px;font-size:12px;color:#e3e6e8;-webkit-text-stroke:0.18px #e3e6e8;transform:scaleX(0.9366);transform-origin:0 50%;">27</span>
<svg style="left:1773px;top:130px;" width="11" height="11" viewBox="0 0 11 11"><path d="M0.5 0.5 H10.5 V8 H3.5 L0.5 10.5 Z" fill="#f04a3e"/><path d="M4 2.5 L7.5 6 M7.5 2.5 L4 6" stroke="#283c42" stroke-width="1.2"/></svg>
<span class="t" style="left:1785px;top:129.86px;font-size:12px;color:#e3e6e8;-webkit-text-stroke:0.18px #e3e6e8;">1</span>
<div style="left:1801.5px;top:126px;width:1px;height:16px;background:#3b5a62;"></div>
<div style="left:1809.5px;top:124px;width:20px;height:20px;background:#2f7de9;border-radius:10px;"></div>
<svg style="left:1812.5px;top:127px;" width="14" height="14" viewBox="0 0 14 14"><path d="M2 2 H8.5 M2 2 V9.5 H5 L5 12 L8 9.5 H12 V6.5" fill="none" stroke="#fff" stroke-width="1.4" stroke-linejoin="round"/><path d="M11 0.5 L11.7 2.3 L13.5 3 L11.7 3.7 L11 5.5 L10.3 3.7 L8.5 3 L10.3 2.3 Z" fill="#fff"/></svg>
<svg style="left:1837px;top:125px;" width="18" height="18" viewBox="0 0 18 18"><g fill="none" stroke="#dfe3e5" stroke-width="1.4" stroke-linejoin="round"><path d="M7.6 1.5 H10.4 L10.8 3.6 L12.3 4.5 L14.3 3.7 L15.7 6.1 L14.1 7.5 V10.5 L15.7 11.9 L14.3 14.3 L12.3 13.5 L10.8 14.4 L10.4 16.5 H7.6 L7.2 14.4 L5.7 13.5 L3.7 14.3 L2.3 11.9 L3.9 10.5 V7.5 L2.3 6.1 L3.7 3.7 L5.7 4.5 L7.2 3.6 Z"/></g><circle cx="9" cy="9" r="2.1" fill="#dfe3e5"/></svg>
<svg style="left:1871px;top:126px;" width="6" height="18" viewBox="0 0 6 18"><circle cx="3" cy="3" r="1.4" fill="#dfe3e5"/><circle cx="3" cy="8.5" r="1.4" fill="#dfe3e5"/><circle cx="3" cy="14" r="1.4" fill="#dfe3e5"/></svg>
<svg style="left:1895px;top:128px;" width="12" height="12" viewBox="0 0 12 12"><path d="M1 1 L11 11 M11 1 L1 11" stroke="#dfe3e5" stroke-width="1.4" fill="none"/></svg>
<div style="left:986px;top:174px;width:934px;height:1px;background:#3b5a62;"></div>
<svg style="left:993.5px;top:152px;" width="17" height="17" viewBox="0 0 17 17"><circle cx="8.5" cy="8.5" r="7" fill="none" stroke="#f4584a" stroke-width="1.5"/><rect x="5.2" y="5.2" width="6.6" height="6.6" fill="#f4584a"/></svg>
<svg style="left:1021.4px;top:152px;" width="17" height="17" viewBox="0 0 17 17"><circle cx="8.5" cy="8.5" r="7" fill="none" stroke="#d5d9db" stroke-width="1.4"/><path d="M3.6 13.4 L13.4 3.6" stroke="#d5d9db" stroke-width="1.4"/></svg>
<div style="left:1048px;top:153px;width:1px;height:16px;background:#3b5a62;"></div>
<svg style="left:1059px;top:153px;" width="16" height="16" viewBox="0 0 16 16"><path d="M1.5 2 H13 L8.6 7.6 V13 H6 V7.6 Z" fill="#5cc8e0"/><circle cx="13.3" cy="13" r="1.8" fill="#5cc8e0"/></svg>
<svg style="left:1087px;top:153px;" width="15" height="16" viewBox="0 0 15 16"><circle cx="5.8" cy="5.8" r="4.2" fill="none" stroke="#dfe3e5" stroke-width="1.5"/><path d="M9 9 L13.8 13.8" stroke="#dfe3e5" stroke-width="1.6"/></svg>
<div style="left:1113px;top:153px;width:1px;height:16px;background:#3b5a62;"></div>
<div style="left:1124px;top:155px;width:12px;height:12px;background:#3a3c3e;border:1px solid #8b9092;border-radius:2.5px;"></div>
<span class="t" style="left:1142.5px;top:155.86px;font-size:12px;color:#e3e6e8;-webkit-text-stroke:0.18px #e3e6e8;letter-spacing:-0.260px;">Preserve log</span>
<div style="left:1216.5px;top:153px;width:1px;height:16px;background:#3b5a62;"></div>
<div style="left:1227px;top:155px;width:12px;height:12px;background:#3a3c3e;border:1px solid #8b9092;border-radius:2.5px;"></div>
<span class="t" style="left:1245.5px;top:155.86px;font-size:12px;color:#e3e6e8;-webkit-text-stroke:0.18px #e3e6e8;letter-spacing:-0.323px;">Disable cache</span>
<div style="left:1322px;top:149.5px;width:112.5px;height:23.5px;border:1px solid #707679;border-radius:4px;"></div>
<span class="t" style="left:1331.5px;top:155.86px;font-size:12px;color:#e3e6e8;-webkit-text-stroke:0.18px #e3e6e8;letter-spacing:0.317px;">No throttling</span>
<svg style="left:1419px;top:159px;" width="9" height="5" viewBox="0 0 9 5"><path d="M0.5 0.5 H8.5 L4.5 4.5 Z" fill="#c8cdd0"/></svg>
<svg style="left:1440px;top:152px;" width="19" height="18" viewBox="0 0 19 18"><g fill="none" stroke="#dfe3e5" stroke-width="1.5" stroke-linecap="round"><path d="M1.5 6.5 Q9 0 16.5 6.5"/><path d="M4.5 9.8 Q9 6 13.5 9.8"/></g><circle cx="9" cy="13" r="1.6" fill="#dfe3e5"/><circle cx="14.5" cy="14" r="2.2" fill="none" stroke="#dfe3e5" stroke-width="1.1"/></svg>
<div style="left:1467.5px;top:153px;width:1px;height:16px;background:#3b5a62;"></div>
<svg style="left:1478px;top:153px;" width="15" height="16" viewBox="0 0 15 16"><path d="M7.5 11 V2.5 M3.8 5.8 L7.5 2.2 L11.2 5.8 M2 10.5 V14 H13 V10.5" fill="none" stroke="#dfe3e5" stroke-width="1.5"/></svg>
<svg style="left:1506px;top:153px;" width="15" height="16" viewBox="0 0 15 16"><path d="M7.5 2 V10.5 M3.8 7.2 L7.5 10.8 L11.2 7.2 M2 10.5 V14 H13 V10.5" fill="none" stroke="#dfe3e5" stroke-width="1.5"/></svg>
<div style="left:1884px;top:153px;width:1px;height:16px;background:#3b5a62;"></div>
<svg style="left:1892px;top:152px;" width="18" height="18" viewBox="0 0 18 18"><g fill="none" stroke="#dfe3e5" stroke-width="1.4" stroke-linejoin="round"><path d="M7.6 1.5 H10.4 L10.8 3.6 L12.3 4.5 L14.3 3.7 L15.7 6.1 L14.1 7.5 V10.5 L15.7 11.9 L14.3 14.3 L12.3 13.5 L10.8 14.4 L10.4 16.5 H7.6 L7.2 14.4 L5.7 13.5 L3.7 14.3 L2.3 11.9 L3.9 10.5 V7.5 L2.3 6.1 L3.7 3.7 L5.7 4.5 L7.2 3.6 Z"/></g><circle cx="9" cy="9" r="2.1" fill="#dfe3e5"/></svg>
<div style="left:986px;top:201px;width:934px;height:1px;background:#3b5a62;"></div>
<div style="left:991px;top:178px;width:225px;height:20px;background:#263c42;border-radius:10px;"></div>
<svg style="left:1000px;top:182px;" width="13" height="13" viewBox="0 0 13 13"><path d="M1.5 1.5 H11.5 L7.5 6.5 V11.5 H5.5 V6.5 Z" fill="none" stroke="#dfe3e5" stroke-width="1.3" stroke-linejoin="round"/></svg>
<svg style="left:1191.5px;top:181.5px;" width="13" height="13" viewBox="0 0 13 13"><circle cx="6.5" cy="6.5" r="6.3" fill="#d3dcdf"/><path d="M4.2 4.2 L8.8 8.8 M8.8 4.2 L4.2 8.8" stroke="#20323a" stroke-width="1.3"/></svg>
<div style="left:1228px;top:182px;width:12px;height:12px;background:#3a3c3e;border:1px solid #8b9092;border-radius:2.5px;"></div>
<span class="t" style="left:1246px;top:182.86px;font-size:12px;color:#e3e6e8;-webkit-text-stroke:0.18px #e3e6e8;letter-spacing:-0.002px;">Invert</span>
<div style="left:1287.5px;top:180px;width:1px;height:16px;background:#3b5a62;"></div>
<span class="t" style="left:1306px;top:182.86px;font-size:12px;color:#e3e6e8;-webkit-text-stroke:0.18px #e3e6e8;letter-spacing:0.151px;">More filters</span>
<svg style="left:1373.5px;top:186px;" width="9" height="6" viewBox="0 0 9 6"><path d="M0.5 0.5 H8.5 L4.5 5 Z" fill="#dfe3e5"/></svg>
<div style="left:1399px;top:179px;width:24.5px;height:19.5px;background:#3b4d53;border-radius:6px;"></div>
<span class="t" style="left:1405px;top:182.86px;font-size:12px;color:#fff;-webkit-text-stroke:0.18px #fff;letter-spacing:-0.418px;">All</span>
<div style="left:1428.5px;top:180px;width:1px;height:16px;background:#3b5a62;"></div>
<div style="left:1433.3px;top:178.5px;width:64.5px;height:20px;border:1px solid #5f6b70;border-radius:6.5px;"></div>
<span class="t" style="left:1439.2px;top:183.29px;font-size:11.5px;color:#fff;-webkit-text-stroke:0.18px #fff;letter-spacing:-0.367px;">Fetch/XHR</span>
<div style="left:1502px;top:178.5px;width:31.40000000000009px;height:20px;border:1px solid #5f6b70;border-radius:6.5px;"></div>
<span class="t" style="left:1508.3px;top:183.29px;font-size:11.5px;color:#fff;-webkit-text-stroke:0.18px #fff;letter-spacing:-0.375px;">Doc</span>
<div style="left:1538.2px;top:178.5px;width:30.59999999999991px;height:20px;border:1px solid #5f6b70;border-radius:6.5px;"></div>
<span class="t" style="left:1543.7px;top:183.29px;font-size:11.5px;color:#fff;-webkit-text-stroke:0.18px #fff;transform:scaleX(0.8162);transform-origin:0 50%;">CSS</span>
<div style="left:1573.2px;top:178.5px;width:21.59999999999991px;height:20px;border:1px solid #5f6b70;border-radius:6.5px;"></div>
<span class="t" style="left:1578.7px;top:183.29px;font-size:11.5px;color:#fff;-webkit-text-stroke:0.18px #fff;transform:scaleX(0.7824);transform-origin:0 50%;">JS</span>
<div style="left:1599px;top:178.5px;width:34px;height:20px;border:1px solid #5f6b70;border-radius:6.5px;"></div>
<span class="t" style="left:1605.3px;top:183.29px;font-size:11.5px;color:#fff;-webkit-text-stroke:0.18px #fff;letter-spacing:-0.270px;">Font</span>
<div style="left:1637.5px;top:178.5px;width:31.0px;height:20px;border:1px solid #5f6b70;border-radius:6.5px;"></div>
<span class="t" style="left:1643.7px;top:183.29px;font-size:11.5px;color:#fff;-webkit-text-stroke:0.18px #fff;letter-spacing:-0.285px;">Img</span>
<div style="left:1673px;top:178.5px;width:43px;height:20px;border:1px solid #5f6b70;border-radius:6.5px;"></div>
<span class="t" style="left:1679.2px;top:183.29px;font-size:11.5px;color:#fff;-webkit-text-stroke:0.18px #fff;letter-spacing:-0.080px;">Media</span>
<div style="left:1720px;top:178.5px;width:55.700000000000045px;height:20px;border:1px solid #5f6b70;border-radius:6.5px;"></div>
<span class="t" style="left:1726.6px;top:183.29px;font-size:11.5px;color:#fff;-webkit-text-stroke:0.18px #fff;letter-spacing:-0.008px;">Manifest</span>
<div style="left:1780px;top:178.5px;width:45px;height:20px;border:1px solid #5f6b70;border-radius:6.5px;"></div>
<span class="t" style="left:1785.8px;top:183.29px;font-size:11.5px;color:#fff;-webkit-text-stroke:0.18px #fff;letter-spacing:-0.391px;">Socket</span>
<div style="left:1829px;top:178.5px;width:42px;height:20px;border:1px solid #5f6b70;border-radius:6.5px;"></div>
<span class="t" style="left:1835px;top:183.29px;font-size:11.5px;color:#fff;-webkit-text-stroke:0.18px #fff;transform:scaleX(0.9486);transform-origin:0 50%;">Wasm</span>
<div style="left:1875px;top:178.5px;width:41px;height:20px;border:1px solid #5f6b70;border-radius:6.5px;"></div>
<span class="t" style="left:1881.6px;top:183.29px;font-size:11.5px;color:#fff;-webkit-text-stroke:0.18px #fff;letter-spacing:-0.015px;">Other</span>
<div style="left:986px;top:282px;width:934px;height:1px;background:#3b5a62;"></div>
<div style="left:1113px;top:202px;width:1px;height:80px;background:#3a474b;"></div>
<span class="t" style="left:1073.0px;top:207.56px;font-size:10px;color:#f0f2f3;-webkit-text-stroke:0.18px #f0f2f3;transform:scaleX(0.9118);transform-origin:0 50%;">2,000 ms</span>
<div style="left:1240px;top:202px;width:1px;height:80px;background:#3a474b;"></div>
<span class="t" style="left:1200.0px;top:207.56px;font-size:10px;color:#f0f2f3;-webkit-text-stroke:0.18px #f0f2f3;transform:scaleX(0.9118);transform-origin:0 50%;">4,000 ms</span>
<div style="left:1367px;top:202px;width:1px;height:80px;background:#3a474b;"></div>
<span class="t" style="left:1327.0px;top:207.56px;font-size:10px;color:#f0f2f3;-webkit-text-stroke:0.18px #f0f2f3;transform:scaleX(0.9118);transform-origin:0 50%;">6,000 ms</span>
<div style="left:1494px;top:202px;width:1px;height:80px;background:#3a474b;"></div>
<span class="t" style="left:1454.0px;top:207.56px;font-size:10px;color:#f0f2f3;-webkit-text-stroke:0.18px #f0f2f3;transform:scaleX(0.9118);transform-origin:0 50%;">8,000 ms</span>
<div style="left:1621px;top:202px;width:1px;height:80px;background:#3a474b;"></div>
<span class="t" style="left:1576.0px;top:207.56px;font-size:10px;color:#f0f2f3;-webkit-text-stroke:0.18px #f0f2f3;transform:scaleX(0.9102);transform-origin:0 50%;">10,000 ms</span>
<div style="left:1748px;top:202px;width:1px;height:80px;background:#3a474b;"></div>
<span class="t" style="left:1703.0px;top:207.56px;font-size:10px;color:#f0f2f3;-webkit-text-stroke:0.18px #f0f2f3;transform:scaleX(0.9102);transform-origin:0 50%;">12,000 ms</span>
<div style="left:1875px;top:202px;width:1px;height:80px;background:#3a474b;"></div>
<span class="t" style="left:1830.0px;top:207.56px;font-size:10px;color:#f0f2f3;-webkit-text-stroke:0.18px #f0f2f3;transform:scaleX(0.9102);transform-origin:0 50%;">14,000 ms</span>
<div style="left:986px;top:203px;width:4px;height:17px;background:#2d444b;border-radius:0 3px 3px 0;"></div>
<div style="left:987px;top:206px;width:1.5px;height:10px;background:#7cd5ea;"></div>
<div style="left:1915.5px;top:203px;width:4.5px;height:17px;background:#2d444b;border-radius:3px 0 0 3px;"></div>
<div style="left:1917.5px;top:206px;width:1.5px;height:10px;background:#7cd5ea;"></div>
<div style="left:988px;top:227px;width:340px;height:2px;background:#6e6e6e;"></div>
<div style="left:1221px;top:227px;width:1.6px;height:2px;background:#202528;"></div>
<div style="left:1232.5px;top:227px;width:1.6px;height:2px;background:#202528;"></div>
<div style="left:1246.5px;top:227px;width:1.6px;height:2px;background:#202528;"></div>
<div style="left:1256.5px;top:227px;width:1.6px;height:2px;background:#202528;"></div>
<div style="left:1280.5px;top:227px;width:1.6px;height:2px;background:#202528;"></div>
<div style="left:1290.5px;top:227px;width:1.6px;height:2px;background:#202528;"></div>
<div style="left:988px;top:230.3px;width:9px;height:2.6px;background:#49c5e3;"></div>
<div style="left:998px;top:230.3px;width:3px;height:2.6px;background:#e8a33a;"></div>
<div style="left:1002px;top:230.3px;width:6px;height:2.6px;background:#c583dd;"></div>
<div style="left:1009.5px;top:230.3px;width:17.0px;height:2.6px;background:#2fb457;"></div>
<div style="left:1028px;top:230.3px;width:14px;height:2.6px;background:#4c84ee;"></div>
<div style="left:1143px;top:230.3px;width:2px;height:2.6px;background:#3a5a40;"></div>
<div style="left:1146.5px;top:230.3px;width:2.5px;height:2.6px;background:#2fb457;"></div>
<div style="left:1149.8px;top:230.3px;width:2.7000000000000455px;height:2.6px;background:#4c84ee;"></div>
<div style="left:1152.5px;top:225.5px;width:59.5px;height:9.5px;background:#263a40;border-radius:1px;"></div>
<div style="left:1154px;top:227px;width:56.5px;height:6.5px;background:#2fb457;"></div>
<div style="left:1154px;top:227px;width:1.6px;height:6.5px;background:#f2f2f2;"></div>
<div style="left:1209.5px;top:227px;width:1.2px;height:6.5px;background:#4c84ee;"></div>
<div style="left:1213.5px;top:230.3px;width:3.0px;height:2.6px;background:#4c84ee;"></div>
<div style="left:1219.4px;top:230.3px;width:8.299999999999955px;height:2.6px;background:#2fb457;"></div>
<div style="left:1229px;top:230.3px;width:8.700000000000045px;height:2.6px;background:#4c84ee;"></div>
<div style="left:1239px;top:230.3px;width:4px;height:2.6px;background:#2fb457;"></div>
<div style="left:1244.4px;top:230.3px;width:8.899999999999864px;height:2.6px;background:#4c84ee;"></div>
<div style="left:1283.3px;top:230.3px;width:10.700000000000045px;height:2.6px;background:#2fb457;"></div>
<div style="left:1295.4px;top:230.3px;width:8.299999999999955px;height:2.6px;background:#4c84ee;"></div>
<div style="left:1305px;top:230.3px;width:3px;height:2.6px;background:#4c84ee;"></div>
<div style="left:1310px;top:230.3px;width:5px;height:2.6px;background:#2fb457;"></div>
<div style="left:1316px;top:230.3px;width:18px;height:2.6px;background:#4c84ee;"></div>
<div style="left:1335.4px;top:230.3px;width:8.599999999999909px;height:2.6px;background:#4c84ee;"></div>
<div style="left:1324px;top:230.3px;width:1.2px;height:2.6px;background:#202528;"></div>
<div style="left:1329px;top:230.3px;width:1.2px;height:2.6px;background:#202528;"></div>
<div style="left:1454px;top:227px;width:13.5px;height:2px;background:#6e6e6e;"></div>
<div style="left:1496px;top:227px;width:7.5px;height:2px;background:#6e6e6e;"></div>
<div style="left:1515px;top:227px;width:9px;height:2px;background:#6e6e6e;"></div>
<div style="left:1846.5px;top:227px;width:8.5px;height:2px;background:#6e6e6e;"></div>
<div style="left:1791px;top:230.3px;width:7px;height:2.6px;background:#2fb457;"></div>
<div style="left:1798px;top:230.3px;width:9px;height:2.6px;background:#4c84ee;"></div>
<div style="left:1140px;top:222px;width:1.2px;height:60px;background:#a9c5ff;"></div>
<div style="left:1217px;top:222px;width:1.2px;height:60px;background:#f3a39c;"></div>
<div style="left:986px;top:283px;width:184px;height:26px;background:#202528;"></div>
<div style="left:986px;top:309px;width:184px;height:1px;background:#3b5a62;"></div>
<span class="t" style="left:991px;top:290.86px;font-size:12px;color:#fff;-webkit-text-stroke:0.18px #fff;letter-spacing:-0.003px;">Name</span>
<div style="left:1170px;top:283px;width:15px;height:522px;background:#2b2b2b;"></div>
<svg style="left:1172px;top:287px;" width="10" height="8" viewBox="0 0 10 8"><path d="M5 0.5 L9.5 7.5 H0.5 Z" fill="#a3a3a3"/></svg>
<svg style="left:1172px;top:793px;" width="10" height="8" viewBox="0 0 10 8"><path d="M0.5 0.5 H9.5 L5 7.5 Z" fill="#a3a3a3"/></svg>
<div style="left:1173.5px;top:487px;width:8px;height:158px;background:#a0a0a0;border-radius:4px;"></div>
<div style="left:1185px;top:283px;width:1px;height:549px;background:#3b5a62;"></div>
<div style="left:986px;top:309px;width:184px;height:496px;overflow:hidden;">
<div style="left:0px;top:-14px;width:184px;height:21px;background:#1e272a;"></div>
<svg style="left:6px;top:-9.5px;" width="12" height="12" viewBox="0 0 12 12"><rect x="0.8" y="0.8" width="10.4" height="10.4" rx="2" fill="none" stroke="#2da35c" stroke-width="1.3"/><path d="M4.3 3.3 L8.6 6 L4.3 8.7 Z" fill="#2da35c"/></svg>
<span class="t" style="left:23px;top:-8.14px;font-size:12px;color:#f4f6f7;-webkit-text-stroke:0.18px #f4f6f7;transform:scaleX(0.8474);transform-origin:0 50%;">cancel.mp3</span>
<div style="left:0px;top:7px;width:184px;height:21px;background:#171c1f;"></div>
<svg style="left:6px;top:11.5px;" width="12" height="12" viewBox="0 0 12 12"><rect x="0.8" y="0.8" width="10.4" height="10.4" rx="2" fill="none" stroke="#2da35c" stroke-width="1.3"/><path d="M4.3 3.3 L8.6 6 L4.3 8.7 Z" fill="#2da35c"/></svg>
<span class="t" style="left:23px;top:12.86px;font-size:12px;color:#f4f6f7;-webkit-text-stroke:0.18px #f4f6f7;letter-spacing:-0.041px;">delete.mp3</span>
<div style="left:0px;top:28px;width:184px;height:21px;background:#1e272a;"></div>
<svg style="left:6px;top:32.5px;" width="12" height="12" viewBox="0 0 12 12"><rect x="0.8" y="0.8" width="10.4" height="10.4" rx="2" fill="none" stroke="#2da35c" stroke-width="1.3"/><path d="M4.3 3.3 L8.6 6 L4.3 8.7 Z" fill="#2da35c"/></svg>
<span class="t" style="left:23px;top:33.86px;font-size:12px;color:#f4f6f7;-webkit-text-stroke:0.18px #f4f6f7;letter-spacing:-0.126px;">click.mp3</span>
<div style="left:0px;top:49px;width:184px;height:21px;background:#171c1f;"></div>
<svg style="left:6px;top:53.5px;" width="12" height="12" viewBox="0 0 12 12"><rect x="0.8" y="0.8" width="10.4" height="10.4" rx="2" fill="none" stroke="#2da35c" stroke-width="1.3"/><path d="M4.3 3.3 L8.6 6 L4.3 8.7 Z" fill="#2da35c"/></svg>
<span class="t" style="left:23px;top:54.86px;font-size:12px;color:#f4f6f7;-webkit-text-stroke:0.18px #f4f6f7;letter-spacing:0.082px;">error.mp3</span>
<div style="left:0px;top:70px;width:184px;height:21px;background:#1e272a;"></div>
<svg style="left:6px;top:74.5px;" width="12" height="12" viewBox="0 0 12 12"><rect x="0.8" y="0.8" width="10.4" height="10.4" rx="2" fill="none" stroke="#2da35c" stroke-width="1.3"/><path d="M4.3 3.3 L8.6 6 L4.3 8.7 Z" fill="#2da35c"/></svg>
<span class="t" style="left:23px;top:75.86px;font-size:12px;color:#f4f6f7;-webkit-text-stroke:0.18px #f4f6f7;letter-spacing:-0.065px;">alert.mp3</span>
<div style="left:0px;top:91px;width:184px;height:21px;background:#171c1f;"></div>
<svg style="left:6px;top:95.5px;" width="12" height="12" viewBox="0 0 12 12"><rect x="0.8" y="0.8" width="10.4" height="10.4" rx="2" fill="none" stroke="#2da35c" stroke-width="1.3"/><path d="M4.3 3.3 L8.6 6 L4.3 8.7 Z" fill="#2da35c"/></svg>
<span class="t" style="left:23px;top:96.86px;font-size:12px;color:#f4f6f7;-webkit-text-stroke:0.18px #f4f6f7;letter-spacing:0.050px;">incoming-call.mp3</span>
<div style="left:0px;top:112px;width:184px;height:21px;background:#1e272a;"></div>
<svg style="left:6px;top:116.5px;" width="12" height="12" viewBox="0 0 12 12"><rect x="0.8" y="0.8" width="10.4" height="10.4" rx="2" fill="none" stroke="#2da35c" stroke-width="1.3"/><path d="M4.3 3.3 L8.6 6 L4.3 8.7 Z" fill="#2da35c"/></svg>
<span class="t" style="left:23px;top:117.86px;font-size:12px;color:#f4f6f7;-webkit-text-stroke:0.18px #f4f6f7;letter-spacing:-0.030px;">call-disconnect.mp3</span>
<div style="left:0px;top:133px;width:184px;height:21px;background:#171c1f;"></div>
<svg style="left:6px;top:137.5px;" width="12" height="12" viewBox="0 0 12 12"><path d="M1.5 0.8 H7.5 L10.5 3.8 V11.2 H1.5 Z" fill="none" stroke="#cfd3d6" stroke-width="1.2" stroke-linejoin="round"/><path d="M7.3 0.8 V4 H10.5" fill="none" stroke="#cfd3d6" stroke-width="1.1"/></svg>
<span class="t" style="left:23px;top:138.86px;font-size:12px;color:#f4f6f7;-webkit-text-stroke:0.18px #f4f6f7;letter-spacing:-0.020px;">socket.io/?EIO=4&amp;transport...</span>
<div style="left:0px;top:154px;width:184px;height:21px;background:#1e272a;"></div>
<svg style="left:6px;top:158.5px;" width="12" height="12" viewBox="0 0 12 12"><path d="M3.6 0.9 Q1.7 0.9 2 3 Q2.3 5.3 0.5 6 Q2.3 6.7 2 9 Q1.7 11.1 3.6 11.1 M8.4 0.9 Q10.3 0.9 10 3 Q9.7 5.3 11.5 6 Q9.7 6.7 10 9 Q10.3 11.1 8.4 11.1" fill="none" stroke="#f2a070" stroke-width="1.5"/><circle cx="6" cy="3.9" r="1" fill="#f2a070"/><path d="M6 7 Q7.2 7.2 6.6 8.6 L5.6 9.6" stroke="#f2a070" stroke-width="1.3" fill="none"/></svg>
<span class="t" style="left:23px;top:159.86px;font-size:12px;color:#f4f6f7;-webkit-text-stroke:0.18px #f4f6f7;letter-spacing:-0.043px;">frappe.desk.doctype.notific...</span>
<div style="left:0px;top:175px;width:184px;height:21px;background:#171c1f;"></div>
<svg style="left:6px;top:179.5px;" width="12" height="12" viewBox="0 0 12 12"><path d="M3.6 0.9 Q1.7 0.9 2 3 Q2.3 5.3 0.5 6 Q2.3 6.7 2 9 Q1.7 11.1 3.6 11.1 M8.4 0.9 Q10.3 0.9 10 3 Q9.7 5.3 11.5 6 Q9.7 6.7 10 9 Q10.3 11.1 8.4 11.1" fill="none" stroke="#f2a070" stroke-width="1.5"/><circle cx="6" cy="3.9" r="1" fill="#f2a070"/><path d="M6 7 Q7.2 7.2 6.6 8.6 L5.6 9.6" stroke="#f2a070" stroke-width="1.3" fill="none"/></svg>
<span class="t" style="left:23px;top:180.86px;font-size:12px;color:#f4f6f7;-webkit-text-stroke:0.18px #f4f6f7;letter-spacing:-0.147px;">frappe.desk.doctype.event.e...</span>
<div style="left:0px;top:196px;width:184px;height:21px;background:#1e272a;"></div>
<svg style="left:6px;top:200.5px;" width="12" height="12" viewBox="0 0 12 12"><rect x="2" y="4" width="5" height="4" fill="none" stroke="#55595c" stroke-width="0.9"/><path d="M7.5 3 V8 M9 4 V7" stroke="#55595c" stroke-width="0.8"/></svg>
<span class="t" style="left:23px;top:201.86px;font-size:12px;color:#f4f6f7;-webkit-text-stroke:0.18px #f4f6f7;letter-spacing:0.109px;">notification-empty-state.svg</span>
<div style="left:0px;top:217px;width:184px;height:21px;background:#171c1f;"></div>
<svg style="left:6px;top:221.5px;" width="12" height="12" viewBox="0 0 12 12"><path d="M3.6 0.9 Q1.7 0.9 2 3 Q2.3 5.3 0.5 6 Q2.3 6.7 2 9 Q1.7 11.1 3.6 11.1 M8.4 0.9 Q10.3 0.9 10 3 Q9.7 5.3 11.5 6 Q9.7 6.7 10 9 Q10.3 11.1 8.4 11.1" fill="none" stroke="#f2a070" stroke-width="1.5"/><circle cx="6" cy="3.9" r="1" fill="#f2a070"/><path d="M6 7 Q7.2 7.2 6.6 8.6 L5.6 9.6" stroke="#f2a070" stroke-width="1.3" fill="none"/></svg>
<span class="t" style="left:23px;top:222.86px;font-size:12px;color:#f4f6f7;-webkit-text-stroke:0.18px #f4f6f7;letter-spacing:-0.146px;">frappe.desk.desktop.get_wo...</span>
<div style="left:0px;top:238px;width:184px;height:21px;background:#41474a;"></div>
<svg style="left:6px;top:242.5px;" width="12" height="12" viewBox="0 0 12 12"><circle cx="6" cy="6" r="6" fill="#f2483f"/><path d="M3.4 3.4 L8.6 8.6 M8.6 3.4 L3.4 8.6" stroke="#41474a" stroke-width="1.4"/></svg>
<span class="t" style="left:23px;top:243.86px;font-size:12px;color:#f5a199;-webkit-text-stroke:0.18px #f5a199;letter-spacing:-0.066px;">frappe.integrations.frappe_...</span>
<div style="left:0px;top:259px;width:184px;height:21px;background:#171c1f;"></div>
<svg style="left:6px;top:263.5px;" width="12" height="12" viewBox="0 0 12 12"><path d="M1.5 0.8 H7.5 L10.5 3.8 V11.2 H1.5 Z" fill="none" stroke="#cfd3d6" stroke-width="1.2" stroke-linejoin="round"/><path d="M7.3 0.8 V4 H10.5" fill="none" stroke="#cfd3d6" stroke-width="1.1"/></svg>
<span class="t" style="left:23px;top:264.86px;font-size:12px;color:#f4f6f7;-webkit-text-stroke:0.18px #f4f6f7;letter-spacing:-0.020px;">socket.io/?EIO=4&amp;transport...</span>
<div style="left:0px;top:280px;width:184px;height:21px;background:#1e272a;"></div>
<svg style="left:6px;top:284.5px;" width="12" height="12" viewBox="0 0 12 12"><path d="M1.5 0.8 H7.5 L10.5 3.8 V11.2 H1.5 Z" fill="none" stroke="#cfd3d6" stroke-width="1.2" stroke-linejoin="round"/><path d="M7.3 0.8 V4 H10.5" fill="none" stroke="#cfd3d6" stroke-width="1.1"/></svg>
<span class="t" style="left:23px;top:285.86px;font-size:12px;color:#f4f6f7;-webkit-text-stroke:0.18px #f4f6f7;letter-spacing:-0.020px;">socket.io/?EIO=4&amp;transport...</span>
<div style="left:0px;top:301px;width:184px;height:21px;background:#171c1f;"></div>
<svg style="left:6px;top:305.5px;" width="12" height="12" viewBox="0 0 12 12"><rect x="0.8" y="0.8" width="10.4" height="10.4" rx="2" fill="none" stroke="#ef8d4d" stroke-width="1.3"/><path d="M5 4 L3.2 6 L5 8 M7 4 L8.8 6 L7 8" fill="none" stroke="#ef8d4d" stroke-width="1.1"/></svg>
<span class="t" style="left:23px;top:306.86px;font-size:12px;color:#f4f6f7;-webkit-text-stroke:0.18px #f4f6f7;letter-spacing:-0.171px;">p-95896136.js</span>
<div style="left:0px;top:322px;width:184px;height:21px;background:#1e272a;"></div>
<svg style="left:6px;top:326.5px;" width="12" height="12" viewBox="0 0 12 12"><rect x="0.8" y="0.8" width="10.4" height="10.4" rx="2" fill="none" stroke="#ef8d4d" stroke-width="1.3"/><path d="M5 4 L3.2 6 L5 8 M7 4 L8.8 6 L7 8" fill="none" stroke="#ef8d4d" stroke-width="1.1"/></svg>
<span class="t" style="left:23px;top:327.86px;font-size:12px;color:#f4f6f7;-webkit-text-stroke:0.18px #f4f6f7;letter-spacing:-0.087px;">p-3c57e9bf.js</span>
<div style="left:0px;top:343px;width:184px;height:21px;background:#171c1f;"></div>
<svg style="left:6px;top:347.5px;" width="12" height="12" viewBox="0 0 12 12"><rect x="0.8" y="0.8" width="10.4" height="10.4" rx="2" fill="none" stroke="#ef8d4d" stroke-width="1.3"/><path d="M5 4 L3.2 6 L5 8 M7 4 L8.8 6 L7 8" fill="none" stroke="#ef8d4d" stroke-width="1.1"/></svg>
<span class="t" style="left:23px;top:348.86px;font-size:12px;color:#f4f6f7;-webkit-text-stroke:0.18px #f4f6f7;letter-spacing:-0.203px;">main.tsx-Dw1a7DcD.js</span>
<div style="left:0px;top:364px;width:184px;height:21px;background:#1e272a;"></div>
<svg style="left:6px;top:368.5px;" width="12" height="12" viewBox="0 0 12 12"><rect x="0.8" y="0.8" width="10.4" height="10.4" rx="2" fill="none" stroke="#ef8d4d" stroke-width="1.3"/><path d="M5 4 L3.2 6 L5 8 M7 4 L8.8 6 L7 8" fill="none" stroke="#ef8d4d" stroke-width="1.1"/></svg>
<span class="t" style="left:23px;top:369.86px;font-size:12px;color:#f4f6f7;-webkit-text-stroke:0.18px #f4f6f7;letter-spacing:-0.184px;">p-c7a90ecb.js</span>
<div style="left:0px;top:385px;width:184px;height:21px;background:#171c1f;"></div>
<svg style="left:6px;top:389.5px;" width="12" height="12" viewBox="0 0 12 12"><rect x="0.8" y="0.8" width="10.4" height="10.4" rx="2" fill="none" stroke="#ef8d4d" stroke-width="1.3"/><path d="M5 4 L3.2 6 L5 8 M7 4 L8.8 6 L7 8" fill="none" stroke="#ef8d4d" stroke-width="1.1"/></svg>
<span class="t" style="left:23px;top:390.86px;font-size:12px;color:#f4f6f7;-webkit-text-stroke:0.18px #f4f6f7;letter-spacing:-0.087px;">p-3c57e9bf.js</span>
<div style="left:0px;top:406px;width:184px;height:21px;background:#1e272a;"></div>
<svg style="left:6px;top:410.5px;" width="12" height="12" viewBox="0 0 12 12"><rect x="0.8" y="0.8" width="10.4" height="10.4" rx="2" fill="none" stroke="#ef8d4d" stroke-width="1.3"/><path d="M5 4 L3.2 6 L5 8 M7 4 L8.8 6 L7 8" fill="none" stroke="#ef8d4d" stroke-width="1.1"/></svg>
<span class="t" style="left:23px;top:411.86px;font-size:12px;color:#f4f6f7;-webkit-text-stroke:0.18px #f4f6f7;letter-spacing:-0.157px;">p-c69e705d.js</span>
<div style="left:0px;top:427px;width:184px;height:21px;background:#171c1f;"></div>
<svg style="left:6px;top:431.5px;" width="12" height="12" viewBox="0 0 12 12"><path d="M2 2.5 H5" stroke="#3c4043" stroke-width="1"/><circle cx="8.3" cy="7" r="1.6" fill="#e6e6e6"/></svg>
<span class="t" style="left:23px;top:432.86px;font-size:12px;color:#f4f6f7;-webkit-text-stroke:0.18px #f4f6f7;letter-spacing:0.023px;">event-empty-state.svg</span>
<div style="left:0px;top:448px;width:184px;height:21px;background:#1e272a;"></div>
<svg style="left:6px;top:452.5px;" width="12" height="12" viewBox="0 0 12 12"><rect x="0.8" y="0.8" width="10.4" height="10.4" rx="2" fill="none" stroke="#ef8d4d" stroke-width="1.3"/><path d="M5 4 L3.2 6 L5 8 M7 4 L8.8 6 L7 8" fill="none" stroke="#ef8d4d" stroke-width="1.1"/></svg>
<span class="t" style="left:23px;top:453.86px;font-size:12px;color:#f4f6f7;-webkit-text-stroke:0.18px #f4f6f7;letter-spacing:-0.127px;">inject.js</span>
<div style="left:0px;top:469px;width:184px;height:21px;background:#171c1f;"></div>
<svg style="left:6px;top:473.5px;" width="12" height="12" viewBox="0 0 12 12"><rect x="0.8" y="0.8" width="10.4" height="10.4" rx="2" fill="none" stroke="#ef8d4d" stroke-width="1.3"/><path d="M5 4 L3.2 6 L5 8 M7 4 L8.8 6 L7 8" fill="none" stroke="#ef8d4d" stroke-width="1.1"/></svg>
<span class="t" style="left:23px;top:474.86px;font-size:12px;color:#f4f6f7;-webkit-text-stroke:0.18px #f4f6f7;letter-spacing:-0.169px;">client-DzS9b-_p.js</span>
<div style="left:0px;top:490px;width:184px;height:21px;background:#1e272a;"></div>
<svg style="left:6px;top:494.5px;" width="12" height="12" viewBox="0 0 12 12"><rect x="0.8" y="0.8" width="10.4" height="10.4" rx="2" fill="none" stroke="#ef8d4d" stroke-width="1.3"/><path d="M5 4 L3.2 6 L5 8 M7 4 L8.8 6 L7 8" fill="none" stroke="#ef8d4d" stroke-width="1.1"/></svg>
<span class="t" style="left:23px;top:495.86px;font-size:12px;color:#f4f6f7;-webkit-text-stroke:0.18px #f4f6f7;letter-spacing:0.111px;">p-xxxxxxxx.js</span>
</div>
<div style="left:1186px;top:283px;width:734px;height:26px;background:#283c42;"></div>
<div style="left:1186px;top:309px;width:734px;height:1px;background:#3b5a62;"></div>
<svg style="left:1200px;top:291px;" width="12" height="12" viewBox="0 0 12 12"><path d="M1.2 1.2 L10.8 10.8 M10.8 1.2 L1.2 10.8" stroke="#dfe3e5" stroke-width="1.3" fill="none"/></svg>
<span class="t" style="left:1232.5px;top:291.86px;font-size:12px;color:#e3e6e8;-webkit-text-stroke:0.18px #e3e6e8;letter-spacing:-0.226px;">Headers</span>
<span class="t" style="left:1297.5px;top:291.86px;font-size:12px;color:#e3e6e8;-webkit-text-stroke:0.18px #e3e6e8;letter-spacing:-0.196px;">Preview</span>
<span class="t" style="left:1360px;top:291.86px;font-size:12px;color:#7cd5ea;-webkit-text-stroke:0.18px #7cd5ea;letter-spacing:-0.362px;">Response</span>
<div style="left:1350px;top:306px;width:71px;height:3px;background:#7cd5ea;border-radius:3px 3px 0 0;"></div>
<span class="t" style="left:1432px;top:291.86px;font-size:12px;color:#e3e6e8;-webkit-text-stroke:0.18px #e3e6e8;letter-spacing:0.456px;">Initiator</span>
<span class="t" style="left:1496px;top:291.86px;font-size:12px;color:#e3e6e8;-webkit-text-stroke:0.18px #e3e6e8;letter-spacing:0.388px;">Timing</span>
<span class="t" style="left:1554px;top:291.86px;font-size:12px;color:#e3e6e8;-webkit-text-stroke:0.18px #e3e6e8;letter-spacing:-0.142px;">Cookies</span>
<span class="t" style="left:1216.3px;top:317.20px;font-size:11.5px;color:#7cc8e0;font-family:'Liberation Mono',monospace;letter-spacing:-0.3px;">1</span>
<span class="t" style="left:1216.3px;top:334.20px;font-size:11.5px;color:#7cc8e0;font-family:'Liberation Mono',monospace;letter-spacing:-0.3px;">-</span>
<span class="t" style="left:1216.3px;top:351.20px;font-size:11.5px;color:#7cc8e0;font-family:'Liberation Mono',monospace;letter-spacing:-0.3px;">-</span>
<span class="t" style="left:1216.3px;top:368.20px;font-size:11.5px;color:#7cc8e0;font-family:'Liberation Mono',monospace;letter-spacing:-0.3px;">-</span>
<span class="t" style="left:1216.3px;top:384.20px;font-size:11.5px;color:#7cc8e0;font-family:'Liberation Mono',monospace;letter-spacing:-0.3px;">-</span>
<span class="t" style="left:1216.3px;top:401.20px;font-size:11.5px;color:#7cc8e0;font-family:'Liberation Mono',monospace;letter-spacing:-0.3px;">-</span>
<span class="t" style="left:1245.6px;top:317.20px;font-size:11.5px;color:#d5dbe0;font-family:'Liberation Mono',monospace;letter-spacing:-0.3px;">{</span>
<div style="left:1242.5px;top:331px;width:1px;height:67px;background:#4a5256;"></div>
<div style="left:1186px;top:309px;width:719px;height:480px;overflow:hidden;"><div style="left:-1186px;top:-309px;width:1920px;height:1032px;">
<span class="t" style="left:1272px;top:334.20px;font-size:11.5px;color:#fe8d59;font-family:'Liberation Mono',monospace;letter-spacing:-0.3px;">&quot;exception&quot;</span>
<span class="t" style="left:1344.6px;top:334.20px;font-size:11.5px;color:#d5dbe0;font-family:'Liberation Mono',monospace;letter-spacing:-0.3px;">: </span>
<span class="t" style="left:1357.8px;top:334.20px;font-size:11.5px;color:#fe8d59;font-family:'Liberation Mono',monospace;letter-spacing:-0.3px;">&quot;frappe.exceptions.ValidationError: Failed to get site info&quot;</span>
<span class="t" style="left:1753.8px;top:334.20px;font-size:11.5px;color:#d5dbe0;font-family:'Liberation Mono',monospace;letter-spacing:-0.3px;">,</span>
<span class="t" style="left:1272px;top:351.20px;font-size:11.5px;color:#fe8d59;font-family:'Liberation Mono',monospace;letter-spacing:-0.3px;">&quot;exc_type&quot;</span>
<span class="t" style="left:1338.0px;top:351.20px;font-size:11.5px;color:#d5dbe0;font-family:'Liberation Mono',monospace;letter-spacing:-0.3px;">: </span>
<span class="t" style="left:1351.2px;top:351.20px;font-size:11.5px;color:#fe8d59;font-family:'Liberation Mono',monospace;letter-spacing:-0.3px;">&quot;ValidationError&quot;</span>
<span class="t" style="left:1463.4px;top:351.20px;font-size:11.5px;color:#d5dbe0;font-family:'Liberation Mono',monospace;letter-spacing:-0.3px;">,</span>
<span class="t" style="left:1272px;top:368.20px;font-size:11.5px;color:#fe8d59;font-family:'Liberation Mono',monospace;letter-spacing:-0.3px;">&quot;exc&quot;</span>
<span class="t" style="left:1305.0px;top:368.20px;font-size:11.5px;color:#d5dbe0;font-family:'Liberation Mono',monospace;letter-spacing:-0.3px;">: </span>
<span class="t" style="left:1318.2px;top:368.20px;font-size:11.5px;color:#fe8d59;font-family:'Liberation Mono',monospace;letter-spacing:-0.3px;">&quot;[\&quot;Traceback (most recent call last):\\n  File \\\&quot;apps/frappe/frappe/app.py\\\&quot;, line 114, in application</span>
<span class="t" style="left:1272px;top:384.20px;font-size:11.5px;color:#fe8d59;font-family:'Liberation Mono',monospace;letter-spacing:-0.3px;">&quot;_server_messages&quot;</span>
<span class="t" style="left:1390.8px;top:384.20px;font-size:11.5px;color:#d5dbe0;font-family:'Liberation Mono',monospace;letter-spacing:-0.3px;">: </span>
<span class="t" style="left:1404.0px;top:384.20px;font-size:11.5px;color:#fe8d59;font-family:'Liberation Mono',monospace;letter-spacing:-0.3px;">&quot;[\&quot;{\\\&quot;message\\\&quot;: \\\&quot;Failed to get site info\\\&quot;, \\\&quot;title\\\&quot;: \\\&quot;Message\\\&quot;</span>
</div></div>
<span class="t" style="left:1245.6px;top:401.20px;font-size:11.5px;color:#d5dbe0;font-family:'Liberation Mono',monospace;letter-spacing:-0.3px;">}</span>
<div style="left:1905px;top:309px;width:15px;height:480px;background:#2b2b2b;"></div>
<svg style="left:1907.6px;top:314.5px;" width="10" height="8" viewBox="0 0 10 8"><path d="M5 0.5 L9.5 7.5 H0.5 Z" fill="#a3a3a3"/></svg>
<svg style="left:1907.6px;top:778px;" width="10" height="8" viewBox="0 0 10 8"><path d="M0.5 0.5 H9.5 L5 7.5 Z" fill="#a3a3a3"/></svg>
<div style="left:1908px;top:328px;width:9px;height:380px;background:#a0a0a0;border-radius:4.5px;"></div>
<div style="left:1186px;top:789px;width:734px;height:16px;background:#2b2b2b;"></div>
<svg style="left:1190px;top:792px;" width="8" height="10" viewBox="0 0 8 10"><path d="M0.5 5 L7.5 0.5 V9.5 Z" fill="#a3a3a3"/></svg>
<svg style="left:1893px;top:792px;" width="8" height="10" viewBox="0 0 8 10"><path d="M7.5 5 L0.5 0.5 V9.5 Z" fill="#a3a3a3"/></svg>
<div style="left:1203.5px;top:793px;width:46.5px;height:8.5px;background:#a0a0a0;border-radius:4.2px;"></div>
<div style="left:986px;top:805px;width:934px;height:27px;background:#202528;"></div>
<div style="left:986px;top:805px;width:934px;height:1px;background:#3b5a62;"></div>
<div style="left:1185px;top:805px;width:1px;height:27px;background:#3b5a62;"></div>
<span class="t" style="left:996px;top:813.86px;font-size:12px;color:#e3e6e8;-webkit-text-stroke:0.18px #e3e6e8;letter-spacing:-0.190px;">74 requests</span>
<div style="left:1066px;top:811px;width:1px;height:16px;background:#3b5a62;"></div>
<span class="t" style="left:1075.7px;top:813.86px;font-size:12px;color:#e3e6e8;-webkit-text-stroke:0.18px #e3e6e8;letter-spacing:-0.112px;">690 kB transferred</span>
<div style="left:1182px;top:811px;width:1px;height:16px;background:#3b5a62;"></div>
<span class="t" style="left:1194px;top:813.02px;font-size:13px;color:#7cd5ea;font-weight:700;">{ }</span>
<span class="t" style="left:1221px;top:813.86px;font-size:12px;color:#e3e6e8;-webkit-text-stroke:0.18px #e3e6e8;letter-spacing:-0.158px;">Line 1, Column 1711</span>
<div style="left:986px;top:832px;width:934px;height:28px;background:#283c42;"></div>
<div style="left:986px;top:832px;width:934px;height:1px;background:#3b5a62;"></div>
<div style="left:986px;top:859px;width:934px;height:1px;background:#3b5a62;"></div>
<svg style="left:999px;top:838px;" width="6" height="16" viewBox="0 0 6 16"><circle cx="3" cy="2.5" r="1.3" fill="#dfe3e5"/><circle cx="3" cy="7.5" r="1.3" fill="#dfe3e5"/><circle cx="3" cy="12.5" r="1.3" fill="#dfe3e5"/></svg>
<span class="t" style="left:1024px;top:841.86px;font-size:12px;color:#e3e6e8;-webkit-text-stroke:0.18px #e3e6e8;letter-spacing:-0.171px;">Console</span>
<span class="t" style="left:1088px;top:841.86px;font-size:12px;color:#e3e6e8;-webkit-text-stroke:0.18px #e3e6e8;letter-spacing:-0.197px;">AI assistance</span>
<span class="t" style="left:1188px;top:841.86px;font-size:12px;color:#7cd5ea;-webkit-text-stroke:0.18px #7cd5ea;letter-spacing:0.095px;">What&#x27;s new</span>
<svg style="left:1254.5px;top:842.5px;" width="9" height="9" viewBox="0 0 9 9"><path d="M1 1 L8 8 M8 1 L1 8" stroke="#dfe3e5" stroke-width="1.2" fill="none"/></svg>
<div style="left:1178.5px;top:857px;width:92.5px;height:3px;background:#7cd5ea;border-radius:3px 3px 0 0;"></div>
<span class="t" style="left:1281px;top:841.86px;font-size:12px;color:#e3e6e8;-webkit-text-stroke:0.18px #e3e6e8;letter-spacing:0.426px;">Autofill</span>
<svg style="left:1867px;top:839px;" width="14" height="13" viewBox="0 0 14 13"><rect x="0.7" y="0.7" width="12.6" height="11.6" rx="1" fill="none" stroke="#dfe3e5" stroke-width="1.4"/><path d="M8.8 0.7 V12.3" stroke="#dfe3e5" stroke-width="1.4"/></svg>
<svg style="left:1895px;top:840px;" width="12" height="12" viewBox="0 0 12 12"><path d="M1 1 L11 11 M11 1 L1 11" stroke="#dfe3e5" stroke-width="1.4" fill="none"/></svg>
<div style="left:986px;top:860px;width:934px;height:172px;background:#373c3f;"></div>
<div style="left:1158px;top:968px;width:576px;height:80px;background:#171c1f;border-radius:26px;"></div>
<div style="left:1178px;top:988px;width:536px;height:60px;background:#1f2f35;border-radius:16px;"></div>
<span class="t" style="left:1193.5px;top:1004.17px;font-size:14px;color:#7cd5ea;font-weight:700;letter-spacing:-0.143px;text-decoration:underline;text-underline-offset:2px;">MCP server</span>
<div style="left:1178px;top:924px;width:134px;height:24px;background:#77d5e7;border-radius:12px;"></div>
<span class="t" style="left:1191px;top:930.86px;font-size:12px;color:#0b333f;-webkit-text-stroke:0.18px #0b333f;letter-spacing:-0.070px;">See all new features</span>
<div style="left:1178px;top:876px;width:32px;height:32px;background:#1b6fe6;border-radius:16px;"></div>
<svg style="left:1178px;top:876px;" width="32" height="32" viewBox="0 0 32 32"><g fill="none" stroke="#fff" stroke-width="1.3"><circle cx="16" cy="16" r="13"/><circle cx="16" cy="16" r="5.6"/><path d="M16 10.4 H27.6 M11.2 18.8 L5.2 8.6 M20.8 18.8 L15 28.8"/></g></svg>
<span class="t" style="left:1220px;top:885.32px;font-size:15px;color:#f1f3f4;-webkit-text-stroke:0.45px #f1f3f4;letter-spacing:0.442px;">What&#x27;s new in DevTools 143</span>
<div style="left:1905px;top:860px;width:15px;height:172px;background:#2b2b2b;"></div>
<svg style="left:1907.5px;top:864px;" width="10" height="8" viewBox="0 0 10 8"><path d="M5 0.5 L9.5 7.5 H0.5 Z" fill="#a3a3a3"/></svg>
<svg style="left:1907.5px;top:1020px;" width="10" height="8" viewBox="0 0 10 8"><path d="M0.5 0.5 H9.5 L5 7.5 Z" fill="#a3a3a3"/></svg>
<div style="left:1908px;top:878px;width:8.6px;height:51.4px;background:#a0a0a0;border-radius:4.3px;"></div>
</div></body></html>
